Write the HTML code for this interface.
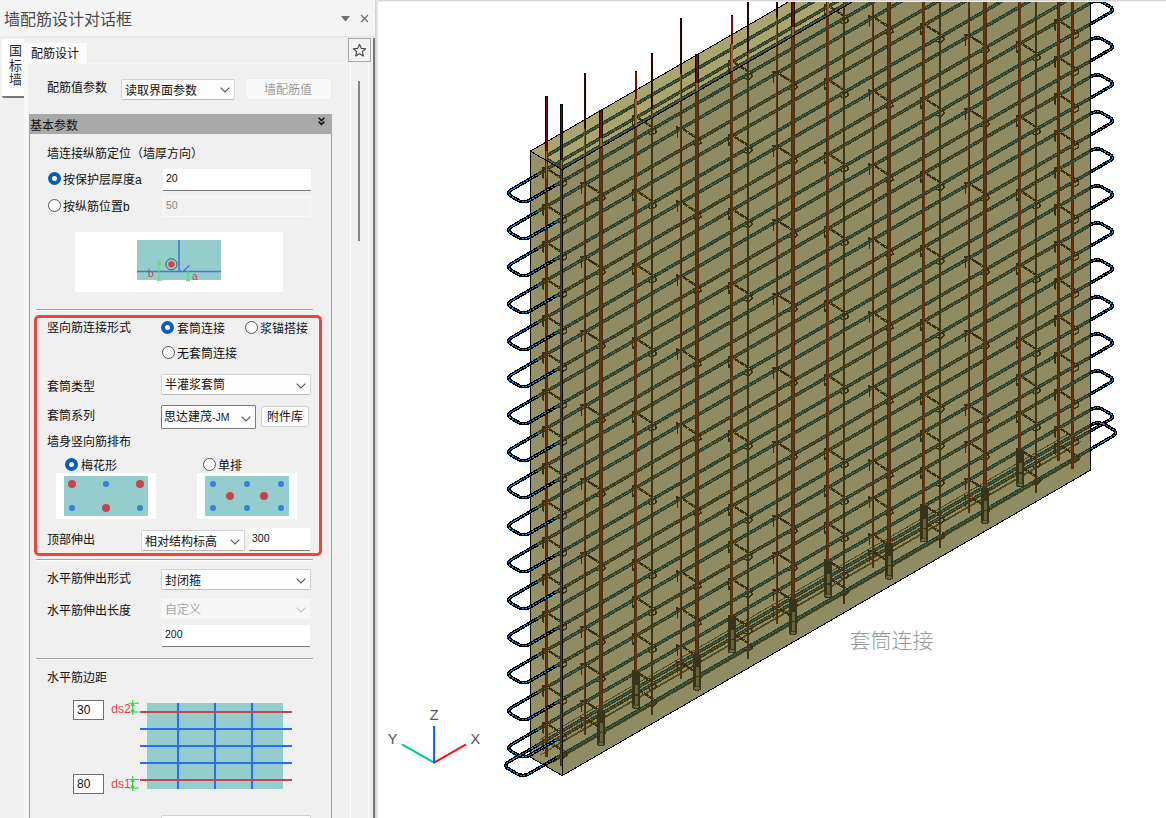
<!DOCTYPE html>
<html lang="zh-CN"><head><meta charset="utf-8"><title>墙配筋设计对话框</title>
<style>
html,body{margin:0;padding:0;}
body{width:1166px;height:818px;position:relative;overflow:hidden;background:#fff;font-family:"Liberation Sans","Noto Sans CJK SC",sans-serif;font-size:12px;color:#111;}
.abs,.abs *{position:absolute;box-sizing:border-box;}
#panel{left:0;top:0;width:378px;height:818px;background:#f0f0f0;overflow:hidden;}
.t{white-space:nowrap;line-height:16px;height:16px;margin-top:1px;}
.lbl{left:47px;}
.sel{background:#fdfdfd;border:1px solid #d2d2d2;border-bottom-color:#bcbcbc;border-radius:2px;}
.sel .t{left:3px;top:2px;}
.sel svg{right:4px;top:6px;}
.inp{background:#fff;border-bottom:1px solid #7a7a7a;}
.inp .t{font-size:10.5px;margin-top:0;}
.rad{width:13px;height:13px;border-radius:50%;border:1px solid #555;background:#fff;}
.rad.on{border:4px solid #0a5db8;background:#fff;}
.sep{left:36px;width:277px;height:2px;border-top:1px solid #a6a6a6;border-bottom:1px solid #fcfcfc;}
.box{background:#fff;}
.teal{background:#95cdcd;}
.dot{border-radius:50%;}
.r{background:#c8434b;width:8px;height:8px;}
.b{background:#3b7de0;width:6px;height:6px;}
</style></head><body>
<div id="panel" class="abs">
  <!-- title bar -->
  <div style="left:0;top:0;width:375px;height:36px;background:#f5f5f5;"></div>
  <div style="left:0;top:36px;width:375px;height:2px;background:#e9e9e9;"></div>
  <div class="t" style="left:4px;top:10px;font-size:16px;color:#4a4a4a;line-height:18px;height:18px;">墙配筋设计对话框</div>
  <svg style="left:341px;top:16px" width="9" height="6" viewBox="0 0 9 6"><path d="M0 0H9L4.5 5.5Z" fill="#707070"/></svg>
  <svg style="left:360px;top:14px" width="9" height="9" viewBox="0 0 9 9"><path d="M1 1L8 8M8 1L1 8" stroke="#707070" stroke-width="1.3" fill="none"/></svg>
  <!-- right edge strips -->
  <div style="left:373px;top:38px;width:2px;height:780px;background:#757575;"></div>
  <div style="left:375px;top:0;width:3px;height:818px;background:linear-gradient(90deg,#cfcfcf,#ececec);"></div>
  <!-- vertical tab -->
  <div style="left:2px;top:39px;width:22px;height:59px;background:#fff;border-bottom:2px solid #777;border-radius:0 0 0 2px;"></div>
  <div class="t" style="left:9px;top:43px;font-size:13px;line-height:14.6px;height:46px;width:14px;white-space:normal;color:#2a2a3a;">国标墙</div>
  <!-- tab page -->
  <div style="left:24px;top:63px;width:327px;height:760px;background:#f7f7f7;border-right:1px solid #fff;"></div>
  <div style="left:28px;top:64px;width:322px;height:760px;background:#f0f0f0;"></div>
  <div style="left:24px;top:43px;width:63px;height:21px;background:#fbfbfb;"></div>
  <div class="t" style="left:31px;top:45px;">配筋设计</div>
  <!-- star button -->
  <div style="left:348px;top:38px;width:23px;height:24px;background:#f4f4f4;border:1px solid #a9a9a9;"></div>
  <svg style="left:352px;top:43px" width="15" height="15" viewBox="0 0 15 15"><path d="M7.5 1.3L9.3 5.4L13.7 5.8L10.4 8.7L11.4 13L7.5 10.7L3.6 13L4.6 8.7L1.3 5.8L5.7 5.4Z" fill="none" stroke="#444" stroke-width="1.1" stroke-linejoin="round"/></svg>
  <!-- scrollbar -->
  <div style="left:358px;top:81px;width:2px;height:160px;background:#858585;"></div>
  <div style="left:368px;top:62px;width:1px;height:760px;background:#f8f8f8;"></div>

  <!-- row 1 -->
  <div class="t" style="left:47px;top:79px;">配筋值参数</div>
  <div class="sel" style="left:121px;top:79px;width:114px;height:21px;"><div class="t">读取界面参数</div>
    <svg width="10" height="6" viewBox="0 0 10 6" style="top:7px"><path d="M.7 .7L5 5L9.3 .7" stroke="#555" stroke-width="1.1" fill="none"/></svg></div>
  <div style="left:245px;top:78px;width:87px;height:22px;background:#f9f9f9;border:1px solid #ececec;border-radius:4px;"></div>
  <div class="t" style="left:245px;top:81px;width:86px;text-align:center;color:#777;font-weight:300;">墙配筋值</div>

  <!-- group -->
  <div style="left:29px;top:114px;width:303px;height:20px;background:#a9a9a9;"></div>
  <div style="left:29px;top:134px;width:303px;height:700px;border-left:1px solid #a3a3a3;border-right:1px solid #a3a3a3;"></div>
  <div class="t" style="left:30px;top:117px;">基本参数</div>
  <svg style="left:318px;top:117px" width="7" height="9" viewBox="0 0 7 9"><path d="M.6 .8L3.5 3.6L6.4 .8M.6 4.6L3.5 7.4L6.4 4.6" stroke="#111" stroke-width="1.5" fill="none"/></svg>

  <div class="t lbl" style="top:145px;">墙连接纵筋定位（墙厚方向）</div>
  <div class="rad on" style="left:48px;top:172px;"></div>
  <div class="t" style="left:63px;top:171px;">按保护层厚度a</div>
  <div class="inp" style="left:163px;top:169px;width:148px;height:22px;"><div class="t" style="left:3px;top:1px;">20</div></div>
  <div class="rad" style="left:48px;top:199px;"></div>
  <div class="t" style="left:63px;top:198px;">按纵筋位置b</div>
  <div style="left:163px;top:196px;width:148px;height:21px;background:#f1f1f1;border:1px solid #f8f8f8;"><div class="t" style="left:2px;top:0px;font-size:10.5px;color:#8a8a8a;margin-top:0;">50</div></div>

  <!-- small diagram -->
  <div class="box" style="left:75px;top:232px;width:208px;height:60px;"></div>
  <svg style="left:75px;top:232px" width="208" height="60" viewBox="75 232 208 60">
    <rect x="137" y="240" width="84" height="40" fill="#95cdcd"/>
    <path d="M179 240V268.5Q179 271.5 182 271.5" stroke="#3b7bd6" stroke-width="1.6" fill="none"/>
    <path d="M137 271.5H221M183.5 271L189.5 265.5" stroke="#3b7bd6" stroke-width="1.4" fill="none"/>
    <circle cx="171.4" cy="264.3" r="5.6" fill="#9fc8c8" stroke="#555" stroke-width="1"/>
    <circle cx="171.4" cy="264.3" r="3.1" fill="#d2404a"/>
    <path d="M159 262V281M157.5 264.5L159 261L160.7 264.5M157 281.5L159 279L162 281M188 272V281M186.5 274.5L188 271.5L189.7 274.5M186.3 281.5L188 279L190 281" stroke="#5fe070" stroke-width="1.2" fill="none"/>
    <text x="148" y="277" font-size="10.5" fill="#d04650" font-family="'Liberation Sans',sans-serif">b</text>
    <text x="192" y="279.5" font-size="10.5" fill="#d04650" font-family="'Liberation Sans',sans-serif">a</text>
  </svg>

  <div class="sep" style="top:309px;"></div>
  <!-- red highlight -->
  <div style="left:34px;top:315px;width:288px;height:241px;border:3px solid #e9483b;border-radius:5px;"></div>

  <div class="t lbl" style="top:319px;">竖向筋连接形式</div>
  <div class="rad on" style="left:161px;top:321px;"></div>
  <div class="t" style="left:177px;top:320px;">套筒连接</div>
  <div class="rad" style="left:245px;top:321px;"></div>
  <div class="t" style="left:260px;top:320px;">浆锚搭接</div>
  <div class="rad" style="left:162px;top:346px;"></div>
  <div class="t" style="left:177px;top:345px;">无套筒连接</div>

  <div class="t lbl" style="top:378px;">套筒类型</div>
  <div class="sel" style="left:161px;top:374px;width:150px;height:21px;"><div class="t" style="top:1px">半灌浆套筒</div>
    <svg width="10" height="6" viewBox="0 0 10 6" style="top:8px"><path d="M.7 .7L5 5L9.3 .7" stroke="#555" stroke-width="1.1" fill="none"/></svg></div>

  <div class="t lbl" style="top:407px;">套筒系列</div>
  <div class="sel" style="left:161px;top:405px;width:95px;height:24px;border-color:#7d7d7d;border-radius:1px;"><div class="t" style="left:2px;top:2px;">思达建茂<span style="font-size:10.5px;color:#223">-JM</span></div>
    <svg width="10" height="6" viewBox="0 0 10 6" style="top:10px"><path d="M.7 .7L5 5L9.3 .7" stroke="#555" stroke-width="1.1" fill="none"/></svg></div>
  <div style="left:261px;top:406px;width:48px;height:21px;background:#fdfdfd;border:1px solid #d0d0d0;border-radius:3px;"></div>
  <div class="t" style="left:261px;top:408px;width:48px;text-align:center;">附件库</div>

  <div class="t lbl" style="top:433px;">墙身竖向筋排布</div>
  <div class="rad on" style="left:65px;top:458px;"></div>
  <div class="t" style="left:81px;top:457px;">梅花形</div>
  <div class="rad" style="left:203px;top:458px;"></div>
  <div class="t" style="left:218px;top:457px;">单排</div>

  <div class="box" style="left:56px;top:473px;width:100px;height:46px;"></div>
  <div class="teal" style="left:64px;top:476px;width:84px;height:40px;"></div>
  <div class="dot r" style="left:68px;top:480px;"></div><div class="dot b" style="left:103px;top:481px;"></div><div class="dot r" style="left:136px;top:480px;"></div>
  <div class="dot b" style="left:69px;top:505px;"></div><div class="dot r" style="left:102px;top:504px;"></div><div class="dot b" style="left:137px;top:505px;"></div>

  <div class="box" style="left:197px;top:473px;width:100px;height:46px;"></div>
  <div class="teal" style="left:205px;top:476px;width:84px;height:40px;"></div>
  <div class="dot b" style="left:210px;top:481px;"></div><div class="dot b" style="left:244px;top:481px;"></div><div class="dot b" style="left:278px;top:481px;"></div>
  <div class="dot b" style="left:210px;top:505px;"></div><div class="dot b" style="left:244px;top:505px;"></div><div class="dot b" style="left:278px;top:505px;"></div>
  <div class="dot r" style="left:226px;top:492px;"></div><div class="dot r" style="left:260px;top:492px;"></div>

  <div class="t lbl" style="top:531px;">顶部伸出</div>
  <div class="sel" style="left:141px;top:530px;width:104px;height:21px;"><div class="t">相对结构标高</div>
    <svg width="10" height="6" viewBox="0 0 10 6" style="top:8px"><path d="M.7 .7L5 5L9.3 .7" stroke="#555" stroke-width="1.1" fill="none"/></svg></div>
  <div class="inp" style="left:249px;top:528px;width:61px;height:23px;"><div class="t" style="left:3px;top:2px;">300</div></div>

  <div class="sep" style="top:559px;"></div>
  <div class="t lbl" style="top:570px;">水平筋伸出形式</div>
  <div class="sel" style="left:161px;top:569px;width:150px;height:21px;"><div class="t">封闭箍</div>
    <svg width="10" height="6" viewBox="0 0 10 6" style="top:8px"><path d="M.7 .7L5 5L9.3 .7" stroke="#555" stroke-width="1.1" fill="none"/></svg></div>
  <div class="t lbl" style="top:602px;">水平筋伸出长度</div>
  <div style="left:161px;top:598px;width:150px;height:21px;background:#f7f7f7;border:1px solid #f2f2f2;"><div class="t" style="left:3px;top:2px;color:#7c7c7c;font-weight:300;">自定义</div>
    <svg width="10" height="6" viewBox="0 0 10 6" style="right:4px;top:8px"><path d="M.7 .7L5 5L9.3 .7" stroke="#c4c4c4" stroke-width="1.1" fill="none"/></svg></div>
  <div class="inp" style="left:162px;top:625px;width:148px;height:22px;"><div class="t" style="left:3px;top:1px;">200</div></div>

  <div class="sep" style="top:658px;"></div>
  <div class="t lbl" style="top:669px;">水平筋边距</div>

  <div style="left:73px;top:700px;width:31px;height:20px;background:#fff;border:1px solid #6e6e6e;"><div class="t" style="left:3px;top:1px;font-size:12px;margin-top:0">30</div></div>
  <div style="left:73px;top:774px;width:31px;height:20px;background:#fff;border:1px solid #6e6e6e;"><div class="t" style="left:3px;top:1px;font-size:12px;margin-top:0">80</div></div>
  <svg style="left:105px;top:695px" width="195" height="105" viewBox="105 695 195 105">
    <rect x="147" y="703" width="136" height="86" fill="#95cdcd"/>
    <g stroke="#2b6cf5" stroke-width="2"><path d="M178 703V789M215 703V789M252 703V789M140 729H292M140 746H292M140 763H292"/></g>
    <g stroke="#c9434b" stroke-width="2"><path d="M140 712H292M140 780H292"/></g>
    <g stroke="#22d83a" stroke-width="1.1" fill="none"><path d="M132.7 700V715M128.5 703.3H139M128.5 712H139M131 706L132.7 703.5L134.4 706M131 709.5L132.7 712L134.4 709.5M132.7 776V791M128.5 779.5H139M128.5 788H139M131 782L132.7 779.7L134.4 782M131 785.5L132.7 788L134.4 785.5"/></g>
    <text x="111.3" y="712.7" font-size="12" fill="#ec4149" font-family="'Liberation Sans',sans-serif">ds2</text>
    <text x="111.3" y="788" font-size="12" fill="#ec4149" font-family="'Liberation Sans',sans-serif">ds1</text>
  </svg>
  <div class="sel" style="left:161px;top:815px;width:150px;height:21px;"></div>
</div>
<svg width="788" height="818" viewBox="378 0 788 818" style="position:absolute;left:378px;top:0">
<defs><clipPath id="vw"><rect x="378" y="2" width="788" height="816"/></clipPath>
<clipPath id="rt"><rect x="1089.5" y="0" width="80" height="818"/></clipPath>
<clipPath id="lf"><rect x="378" y="0" width="711.5" height="818"/></clipPath></defs>
<g clip-path="url(#vw)" fill="none" stroke-linecap="butt" shape-rendering="crispEdges">
<polygon points="562.3,169.7 1090.3,-135.6 1090.3,470.3 562.3,775.6" fill="#8f8b63" stroke="none"/>
<polygon points="530.3,151.2 562.3,169.7 562.3,775.6 530.3,757.1" fill="#949067" stroke="none"/>
<polygon points="530.3,151.2 1058.3,-154.1 1090.3,-135.6 562.3,169.7" fill="#a9a56e" stroke="none"/>
<g stroke="#3c3a18" stroke-width="3.5">
<line x1="537.3" y1="174.7" x2="1065.3" y2="-130.6" />
<line x1="555.6" y1="185.2" x2="1083.6" y2="-120" />
<line x1="537.3" y1="211.7" x2="1065.3" y2="-93.6" />
<line x1="555.6" y1="222.2" x2="1083.6" y2="-83" />
<line x1="537.3" y1="248.7" x2="1065.3" y2="-56.6" />
<line x1="555.6" y1="259.2" x2="1083.6" y2="-46" />
<line x1="537.3" y1="285.7" x2="1065.3" y2="-19.6" />
<line x1="555.6" y1="296.2" x2="1083.6" y2="-9" />
<line x1="537.3" y1="322.7" x2="1065.3" y2="17.4" />
<line x1="555.6" y1="333.2" x2="1083.6" y2="28" />
<line x1="537.3" y1="359.7" x2="1065.3" y2="54.4" />
<line x1="555.6" y1="370.2" x2="1083.6" y2="65" />
<line x1="537.3" y1="396.7" x2="1065.3" y2="91.4" />
<line x1="555.6" y1="407.2" x2="1083.6" y2="102" />
<line x1="537.3" y1="433.7" x2="1065.3" y2="128.4" />
<line x1="555.6" y1="444.2" x2="1083.6" y2="139" />
<line x1="537.3" y1="470.7" x2="1065.3" y2="165.4" />
<line x1="555.6" y1="481.2" x2="1083.6" y2="176" />
<line x1="537.3" y1="507.7" x2="1065.3" y2="202.4" />
<line x1="555.6" y1="518.2" x2="1083.6" y2="213" />
<line x1="537.3" y1="544.7" x2="1065.3" y2="239.4" />
<line x1="555.6" y1="555.2" x2="1083.6" y2="250" />
<line x1="537.3" y1="581.7" x2="1065.3" y2="276.4" />
<line x1="555.6" y1="592.2" x2="1083.6" y2="287" />
<line x1="537.3" y1="618.7" x2="1065.3" y2="313.4" />
<line x1="555.6" y1="629.2" x2="1083.6" y2="324" />
<line x1="537.3" y1="655.7" x2="1065.3" y2="350.4" />
<line x1="555.6" y1="666.2" x2="1083.6" y2="361" />
<line x1="537.3" y1="692.7" x2="1065.3" y2="387.4" />
<line x1="555.6" y1="703.2" x2="1083.6" y2="398" />
<line x1="537.3" y1="729.7" x2="1065.3" y2="424.4" />
<line x1="555.6" y1="740.2" x2="1083.6" y2="435" />
<line x1="536.4" y1="745.8" x2="1064.4" y2="440.5" />
<line x1="556.9" y1="757.6" x2="1084.9" y2="452.4" />
</g>
<g stroke="#2c6e6c" stroke-width="1" stroke-dasharray="3 1">
<line x1="537.3" y1="174.7" x2="1065.3" y2="-130.6" />
<line x1="555.6" y1="185.2" x2="1083.6" y2="-120" />
<line x1="537.3" y1="211.7" x2="1065.3" y2="-93.6" />
<line x1="555.6" y1="222.2" x2="1083.6" y2="-83" />
<line x1="537.3" y1="248.7" x2="1065.3" y2="-56.6" />
<line x1="555.6" y1="259.2" x2="1083.6" y2="-46" />
<line x1="537.3" y1="285.7" x2="1065.3" y2="-19.6" />
<line x1="555.6" y1="296.2" x2="1083.6" y2="-9" />
<line x1="537.3" y1="322.7" x2="1065.3" y2="17.4" />
<line x1="555.6" y1="333.2" x2="1083.6" y2="28" />
<line x1="537.3" y1="359.7" x2="1065.3" y2="54.4" />
<line x1="555.6" y1="370.2" x2="1083.6" y2="65" />
<line x1="537.3" y1="396.7" x2="1065.3" y2="91.4" />
<line x1="555.6" y1="407.2" x2="1083.6" y2="102" />
<line x1="537.3" y1="433.7" x2="1065.3" y2="128.4" />
<line x1="555.6" y1="444.2" x2="1083.6" y2="139" />
<line x1="537.3" y1="470.7" x2="1065.3" y2="165.4" />
<line x1="555.6" y1="481.2" x2="1083.6" y2="176" />
<line x1="537.3" y1="507.7" x2="1065.3" y2="202.4" />
<line x1="555.6" y1="518.2" x2="1083.6" y2="213" />
<line x1="537.3" y1="544.7" x2="1065.3" y2="239.4" />
<line x1="555.6" y1="555.2" x2="1083.6" y2="250" />
<line x1="537.3" y1="581.7" x2="1065.3" y2="276.4" />
<line x1="555.6" y1="592.2" x2="1083.6" y2="287" />
<line x1="537.3" y1="618.7" x2="1065.3" y2="313.4" />
<line x1="555.6" y1="629.2" x2="1083.6" y2="324" />
<line x1="537.3" y1="655.7" x2="1065.3" y2="350.4" />
<line x1="555.6" y1="666.2" x2="1083.6" y2="361" />
<line x1="537.3" y1="692.7" x2="1065.3" y2="387.4" />
<line x1="555.6" y1="703.2" x2="1083.6" y2="398" />
<line x1="537.3" y1="729.7" x2="1065.3" y2="424.4" />
<line x1="555.6" y1="740.2" x2="1083.6" y2="435" />
<line x1="536.4" y1="745.8" x2="1064.4" y2="440.5" />
<line x1="556.9" y1="757.6" x2="1084.9" y2="452.4" />
</g>
<polyline points="548.5,154.7 547.5,155.5 546.8,156.5 546.6,157.5 546.8,158.5 547.5,159.5 548.5,160.3 557.2,165.3 558.6,165.9 560.2,166.3 562,166.4 563.7,166.3 565.4,165.9 566.8,165.3 1072.4,-127 1073.5,-127.9 1074.1,-128.8 1074.4,-129.8 1074.1,-130.8 1073.5,-131.8 1072.4,-132.6 1063.7,-137.6 1062.3,-138.2 1060.7,-138.6 1058.9,-138.7 1057.2,-138.6 1055.5,-138.2 1054.1,-137.6 548.5,154.7" stroke="#3c3a18" stroke-width="3.5"/>
<polyline points="548.5,154.7 547.5,155.5 546.8,156.5 546.6,157.5 546.8,158.5 547.5,159.5 548.5,160.3 557.2,165.3 558.6,165.9 560.2,166.3 562,166.4 563.7,166.3 565.4,165.9 566.8,165.3 1072.4,-127 1073.5,-127.9 1074.1,-128.8 1074.4,-129.8 1074.1,-130.8 1073.5,-131.8 1072.4,-132.6 1063.7,-137.6 1062.3,-138.2 1060.7,-138.6 1058.9,-138.7 1057.2,-138.6 1055.5,-138.2 1054.1,-137.6 548.5,154.7" stroke="#2c6e6c" stroke-width="1" stroke-dasharray="3 1"/>
<g stroke="#4b4a22" stroke-width="1">
<line x1="539.9" y1="739.5" x2="1067.9" y2="434.2" />
<line x1="552.7" y1="746.9" x2="1080.7" y2="441.6" />
<line x1="539.9" y1="755.2" x2="1067.9" y2="450" />
<line x1="552.7" y1="762.6" x2="1080.7" y2="457.4" />
</g>
<g stroke="#38310f" stroke-width="2.3" stroke-linecap="round">
<line x1="546.3" y1="168.4" x2="565.8" y2="180.8" />
<polyline points="546.3,168.4 542.8,167.9 543.3,178.4" stroke-width="1.5"/>
<polyline points="565.8,180.8 566.8,183.8 562.8,186.8 558.8,185.3" stroke-width="1.4"/>
<line x1="546.3" y1="205.4" x2="565.8" y2="217.8" />
<polyline points="546.3,205.4 542.8,204.9 543.3,215.4" stroke-width="1.5"/>
<polyline points="565.8,217.8 566.8,220.8 562.8,223.8 558.8,222.3" stroke-width="1.4"/>
<line x1="546.3" y1="242.4" x2="565.8" y2="254.8" />
<polyline points="546.3,242.4 542.8,241.9 543.3,252.4" stroke-width="1.5"/>
<polyline points="565.8,254.8 566.8,257.8 562.8,260.8 558.8,259.3" stroke-width="1.4"/>
<line x1="546.3" y1="279.4" x2="565.8" y2="291.8" />
<polyline points="546.3,279.4 542.8,278.9 543.3,289.4" stroke-width="1.5"/>
<polyline points="565.8,291.8 566.8,294.8 562.8,297.8 558.8,296.3" stroke-width="1.4"/>
<line x1="546.3" y1="316.4" x2="565.8" y2="328.8" />
<polyline points="546.3,316.4 542.8,315.9 543.3,326.4" stroke-width="1.5"/>
<polyline points="565.8,328.8 566.8,331.8 562.8,334.8 558.8,333.3" stroke-width="1.4"/>
<line x1="546.3" y1="353.4" x2="565.8" y2="365.8" />
<polyline points="546.3,353.4 542.8,352.9 543.3,363.4" stroke-width="1.5"/>
<polyline points="565.8,365.8 566.8,368.8 562.8,371.8 558.8,370.3" stroke-width="1.4"/>
<line x1="546.3" y1="390.4" x2="565.8" y2="402.8" />
<polyline points="546.3,390.4 542.8,389.9 543.3,400.4" stroke-width="1.5"/>
<polyline points="565.8,402.8 566.8,405.8 562.8,408.8 558.8,407.3" stroke-width="1.4"/>
<line x1="546.3" y1="427.4" x2="565.8" y2="439.8" />
<polyline points="546.3,427.4 542.8,426.9 543.3,437.4" stroke-width="1.5"/>
<polyline points="565.8,439.8 566.8,442.8 562.8,445.8 558.8,444.3" stroke-width="1.4"/>
<line x1="546.3" y1="464.4" x2="565.8" y2="476.8" />
<polyline points="546.3,464.4 542.8,463.9 543.3,474.4" stroke-width="1.5"/>
<polyline points="565.8,476.8 566.8,479.8 562.8,482.8 558.8,481.3" stroke-width="1.4"/>
<line x1="546.3" y1="501.4" x2="565.8" y2="513.8" />
<polyline points="546.3,501.4 542.8,500.9 543.3,511.4" stroke-width="1.5"/>
<polyline points="565.8,513.8 566.8,516.8 562.8,519.8 558.8,518.3" stroke-width="1.4"/>
<line x1="546.3" y1="538.4" x2="565.8" y2="550.8" />
<polyline points="546.3,538.4 542.8,537.9 543.3,548.4" stroke-width="1.5"/>
<polyline points="565.8,550.8 566.8,553.8 562.8,556.8 558.8,555.3" stroke-width="1.4"/>
<line x1="546.3" y1="575.4" x2="565.8" y2="587.8" />
<polyline points="546.3,575.4 542.8,574.9 543.3,585.4" stroke-width="1.5"/>
<polyline points="565.8,587.8 566.8,590.8 562.8,593.8 558.8,592.3" stroke-width="1.4"/>
<line x1="546.3" y1="612.4" x2="565.8" y2="624.8" />
<polyline points="546.3,612.4 542.8,611.9 543.3,622.4" stroke-width="1.5"/>
<polyline points="565.8,624.8 566.8,627.8 562.8,630.8 558.8,629.3" stroke-width="1.4"/>
<line x1="546.3" y1="649.4" x2="565.8" y2="661.8" />
<polyline points="546.3,649.4 542.8,648.9 543.3,659.4" stroke-width="1.5"/>
<polyline points="565.8,661.8 566.8,664.8 562.8,667.8 558.8,666.3" stroke-width="1.4"/>
<line x1="546.3" y1="686.4" x2="565.8" y2="698.8" />
<polyline points="546.3,686.4 542.8,685.9 543.3,696.4" stroke-width="1.5"/>
<polyline points="565.8,698.8 566.8,701.8 562.8,704.8 558.8,703.3" stroke-width="1.4"/>
<line x1="546.3" y1="723.4" x2="565.8" y2="735.8" />
<polyline points="546.3,723.4 542.8,722.9 543.3,733.4" stroke-width="1.5"/>
<polyline points="565.8,735.8 566.8,738.8 562.8,741.8 558.8,740.3" stroke-width="1.4"/>
<line x1="546.3" y1="740.1" x2="565.8" y2="752.5" />
<polyline points="546.3,740.1 542.8,739.6 543.3,750.1" stroke-width="1.5"/>
<polyline points="565.8,752.5 566.8,755.5 562.8,758.5 558.8,757" stroke-width="1.4"/>
<line x1="584.7" y1="183.2" x2="604.2" y2="195.6" />
<polyline points="584.7,183.2 581.2,182.7 581.7,193.2" stroke-width="1.5"/>
<polyline points="604.2,195.6 605.2,198.6 601.2,201.6 597.2,200.1" stroke-width="1.4"/>
<line x1="584.7" y1="257.2" x2="604.2" y2="269.6" />
<polyline points="584.7,257.2 581.2,256.7 581.7,267.2" stroke-width="1.5"/>
<polyline points="604.2,269.6 605.2,272.6 601.2,275.6 597.2,274.1" stroke-width="1.4"/>
<line x1="584.7" y1="331.2" x2="604.2" y2="343.6" />
<polyline points="584.7,331.2 581.2,330.7 581.7,341.2" stroke-width="1.5"/>
<polyline points="604.2,343.6 605.2,346.6 601.2,349.6 597.2,348.1" stroke-width="1.4"/>
<line x1="584.7" y1="405.2" x2="604.2" y2="417.6" />
<polyline points="584.7,405.2 581.2,404.7 581.7,415.2" stroke-width="1.5"/>
<polyline points="604.2,417.6 605.2,420.6 601.2,423.6 597.2,422.1" stroke-width="1.4"/>
<line x1="584.7" y1="479.2" x2="604.2" y2="491.6" />
<polyline points="584.7,479.2 581.2,478.7 581.7,489.2" stroke-width="1.5"/>
<polyline points="604.2,491.6 605.2,494.6 601.2,497.6 597.2,496.1" stroke-width="1.4"/>
<line x1="584.7" y1="553.2" x2="604.2" y2="565.6" />
<polyline points="584.7,553.2 581.2,552.7 581.7,563.2" stroke-width="1.5"/>
<polyline points="604.2,565.6 605.2,568.6 601.2,571.6 597.2,570.1" stroke-width="1.4"/>
<line x1="584.7" y1="627.2" x2="604.2" y2="639.6" />
<polyline points="584.7,627.2 581.2,626.7 581.7,637.2" stroke-width="1.5"/>
<polyline points="604.2,639.6 605.2,642.6 601.2,645.6 597.2,644.1" stroke-width="1.4"/>
<line x1="584.7" y1="664.2" x2="604.2" y2="676.6" />
<polyline points="584.7,664.2 581.2,663.7 581.7,674.2" stroke-width="1.5"/>
<polyline points="604.2,676.6 605.2,679.6 601.2,682.6 597.2,681.1" stroke-width="1.4"/>
<line x1="584.7" y1="701.2" x2="604.2" y2="713.6" />
<polyline points="584.7,701.2 581.2,700.7 581.7,711.2" stroke-width="1.5"/>
<polyline points="604.2,713.6 605.2,716.6 601.2,719.6 597.2,718.1" stroke-width="1.4"/>
<line x1="584.7" y1="717.9" x2="604.2" y2="730.2" />
<polyline points="584.7,717.9 581.2,717.4 581.7,727.9" stroke-width="1.5"/>
<polyline points="604.2,730.2 605.2,733.2 601.2,736.2 597.2,734.8" stroke-width="1.4"/>
<line x1="635.9" y1="116.6" x2="655.4" y2="129" />
<polyline points="635.9,116.6 632.4,116.1 632.9,126.6" stroke-width="1.5"/>
<polyline points="655.4,129 656.4,132 652.4,135 648.4,133.5" stroke-width="1.4"/>
<line x1="635.9" y1="190.6" x2="655.4" y2="203" />
<polyline points="635.9,190.6 632.4,190.1 632.9,200.6" stroke-width="1.5"/>
<polyline points="655.4,203 656.4,206 652.4,209 648.4,207.5" stroke-width="1.4"/>
<line x1="635.9" y1="264.6" x2="655.4" y2="277" />
<polyline points="635.9,264.6 632.4,264.1 632.9,274.6" stroke-width="1.5"/>
<polyline points="655.4,277 656.4,280 652.4,283 648.4,281.5" stroke-width="1.4"/>
<line x1="635.9" y1="338.6" x2="655.4" y2="351" />
<polyline points="635.9,338.6 632.4,338.1 632.9,348.6" stroke-width="1.5"/>
<polyline points="655.4,351 656.4,354 652.4,357 648.4,355.5" stroke-width="1.4"/>
<line x1="635.9" y1="412.6" x2="655.4" y2="425" />
<polyline points="635.9,412.6 632.4,412.1 632.9,422.6" stroke-width="1.5"/>
<polyline points="655.4,425 656.4,428 652.4,431 648.4,429.5" stroke-width="1.4"/>
<line x1="635.9" y1="486.6" x2="655.4" y2="499" />
<polyline points="635.9,486.6 632.4,486.1 632.9,496.6" stroke-width="1.5"/>
<polyline points="655.4,499 656.4,502 652.4,505 648.4,503.5" stroke-width="1.4"/>
<line x1="635.9" y1="560.6" x2="655.4" y2="573" />
<polyline points="635.9,560.6 632.4,560.1 632.9,570.6" stroke-width="1.5"/>
<polyline points="655.4,573 656.4,576 652.4,579 648.4,577.5" stroke-width="1.4"/>
<line x1="635.9" y1="597.6" x2="655.4" y2="610" />
<polyline points="635.9,597.6 632.4,597.1 632.9,607.6" stroke-width="1.5"/>
<polyline points="655.4,610 656.4,613 652.4,616 648.4,614.5" stroke-width="1.4"/>
<line x1="635.9" y1="634.6" x2="655.4" y2="647" />
<polyline points="635.9,634.6 632.4,634.1 632.9,644.6" stroke-width="1.5"/>
<polyline points="655.4,647 656.4,650 652.4,653 648.4,651.5" stroke-width="1.4"/>
<line x1="635.9" y1="671.6" x2="655.4" y2="684" />
<polyline points="635.9,671.6 632.4,671.1 632.9,681.6" stroke-width="1.5"/>
<polyline points="655.4,684 656.4,687 652.4,690 648.4,688.5" stroke-width="1.4"/>
<line x1="635.9" y1="688.3" x2="655.4" y2="700.6" />
<polyline points="635.9,688.3 632.4,687.8 632.9,698.3" stroke-width="1.5"/>
<polyline points="655.4,700.6 656.4,703.6 652.4,706.6 648.4,705.1" stroke-width="1.4"/>
<line x1="680.7" y1="127.7" x2="700.2" y2="140.1" />
<polyline points="680.7,127.7 677.2,127.2 677.7,137.7" stroke-width="1.5"/>
<polyline points="700.2,140.1 701.2,143.1 697.2,146.1 693.2,144.6" stroke-width="1.4"/>
<line x1="680.7" y1="201.7" x2="700.2" y2="214.1" />
<polyline points="680.7,201.7 677.2,201.2 677.7,211.7" stroke-width="1.5"/>
<polyline points="700.2,214.1 701.2,217.1 697.2,220.1 693.2,218.6" stroke-width="1.4"/>
<line x1="680.7" y1="275.7" x2="700.2" y2="288.1" />
<polyline points="680.7,275.7 677.2,275.2 677.7,285.7" stroke-width="1.5"/>
<polyline points="700.2,288.1 701.2,291.1 697.2,294.1 693.2,292.6" stroke-width="1.4"/>
<line x1="680.7" y1="349.7" x2="700.2" y2="362.1" />
<polyline points="680.7,349.7 677.2,349.2 677.7,359.7" stroke-width="1.5"/>
<polyline points="700.2,362.1 701.2,365.1 697.2,368.1 693.2,366.6" stroke-width="1.4"/>
<line x1="680.7" y1="423.7" x2="700.2" y2="436.1" />
<polyline points="680.7,423.7 677.2,423.2 677.7,433.7" stroke-width="1.5"/>
<polyline points="700.2,436.1 701.2,439.1 697.2,442.1 693.2,440.6" stroke-width="1.4"/>
<line x1="680.7" y1="497.7" x2="700.2" y2="510.1" />
<polyline points="680.7,497.7 677.2,497.2 677.7,507.7" stroke-width="1.5"/>
<polyline points="700.2,510.1 701.2,513.1 697.2,516.1 693.2,514.6" stroke-width="1.4"/>
<line x1="680.7" y1="571.7" x2="700.2" y2="584.1" />
<polyline points="680.7,571.7 677.2,571.2 677.7,581.7" stroke-width="1.5"/>
<polyline points="700.2,584.1 701.2,587.1 697.2,590.1 693.2,588.6" stroke-width="1.4"/>
<line x1="680.7" y1="608.7" x2="700.2" y2="621.1" />
<polyline points="680.7,608.7 677.2,608.2 677.7,618.7" stroke-width="1.5"/>
<polyline points="700.2,621.1 701.2,624.1 697.2,627.1 693.2,625.6" stroke-width="1.4"/>
<line x1="680.7" y1="645.7" x2="700.2" y2="658.1" />
<polyline points="680.7,645.7 677.2,645.2 677.7,655.7" stroke-width="1.5"/>
<polyline points="700.2,658.1 701.2,661.1 697.2,664.1 693.2,662.6" stroke-width="1.4"/>
<line x1="680.7" y1="662.4" x2="700.2" y2="674.8" />
<polyline points="680.7,662.4 677.2,661.9 677.7,672.4" stroke-width="1.5"/>
<polyline points="700.2,674.8 701.2,677.8 697.2,680.8 693.2,679.2" stroke-width="1.4"/>
<line x1="731.9" y1="61.1" x2="751.4" y2="73.5" />
<polyline points="731.9,61.1 728.4,60.6 728.9,71.1" stroke-width="1.5"/>
<polyline points="751.4,73.5 752.4,76.5 748.4,79.5 744.4,78" stroke-width="1.4"/>
<line x1="731.9" y1="135.1" x2="751.4" y2="147.5" />
<polyline points="731.9,135.1 728.4,134.6 728.9,145.1" stroke-width="1.5"/>
<polyline points="751.4,147.5 752.4,150.5 748.4,153.5 744.4,152" stroke-width="1.4"/>
<line x1="731.9" y1="209.1" x2="751.4" y2="221.5" />
<polyline points="731.9,209.1 728.4,208.6 728.9,219.1" stroke-width="1.5"/>
<polyline points="751.4,221.5 752.4,224.5 748.4,227.5 744.4,226" stroke-width="1.4"/>
<line x1="731.9" y1="283.1" x2="751.4" y2="295.5" />
<polyline points="731.9,283.1 728.4,282.6 728.9,293.1" stroke-width="1.5"/>
<polyline points="751.4,295.5 752.4,298.5 748.4,301.5 744.4,300" stroke-width="1.4"/>
<line x1="731.9" y1="357.1" x2="751.4" y2="369.5" />
<polyline points="731.9,357.1 728.4,356.6 728.9,367.1" stroke-width="1.5"/>
<polyline points="751.4,369.5 752.4,372.5 748.4,375.5 744.4,374" stroke-width="1.4"/>
<line x1="731.9" y1="431.1" x2="751.4" y2="443.5" />
<polyline points="731.9,431.1 728.4,430.6 728.9,441.1" stroke-width="1.5"/>
<polyline points="751.4,443.5 752.4,446.5 748.4,449.5 744.4,448" stroke-width="1.4"/>
<line x1="731.9" y1="505.1" x2="751.4" y2="517.5" />
<polyline points="731.9,505.1 728.4,504.6 728.9,515.1" stroke-width="1.5"/>
<polyline points="751.4,517.5 752.4,520.5 748.4,523.5 744.4,522" stroke-width="1.4"/>
<line x1="731.9" y1="542.1" x2="751.4" y2="554.5" />
<polyline points="731.9,542.1 728.4,541.6 728.9,552.1" stroke-width="1.5"/>
<polyline points="751.4,554.5 752.4,557.5 748.4,560.5 744.4,559" stroke-width="1.4"/>
<line x1="731.9" y1="579.1" x2="751.4" y2="591.5" />
<polyline points="731.9,579.1 728.4,578.6 728.9,589.1" stroke-width="1.5"/>
<polyline points="751.4,591.5 752.4,594.5 748.4,597.5 744.4,596" stroke-width="1.4"/>
<line x1="731.9" y1="616.1" x2="751.4" y2="628.5" />
<polyline points="731.9,616.1 728.4,615.6 728.9,626.1" stroke-width="1.5"/>
<polyline points="751.4,628.5 752.4,631.5 748.4,634.5 744.4,633" stroke-width="1.4"/>
<line x1="731.9" y1="632.8" x2="751.4" y2="645.1" />
<polyline points="731.9,632.8 728.4,632.3 728.9,642.8" stroke-width="1.5"/>
<polyline points="751.4,645.1 752.4,648.1 748.4,651.1 744.4,649.6" stroke-width="1.4"/>
<line x1="776.7" y1="72.2" x2="796.2" y2="84.6" />
<polyline points="776.7,72.2 773.2,71.7 773.7,82.2" stroke-width="1.5"/>
<polyline points="796.2,84.6 797.2,87.6 793.2,90.6 789.2,89.1" stroke-width="1.4"/>
<line x1="776.7" y1="146.2" x2="796.2" y2="158.6" />
<polyline points="776.7,146.2 773.2,145.7 773.7,156.2" stroke-width="1.5"/>
<polyline points="796.2,158.6 797.2,161.6 793.2,164.6 789.2,163.1" stroke-width="1.4"/>
<line x1="776.7" y1="220.2" x2="796.2" y2="232.6" />
<polyline points="776.7,220.2 773.2,219.7 773.7,230.2" stroke-width="1.5"/>
<polyline points="796.2,232.6 797.2,235.6 793.2,238.6 789.2,237.1" stroke-width="1.4"/>
<line x1="776.7" y1="294.2" x2="796.2" y2="306.6" />
<polyline points="776.7,294.2 773.2,293.7 773.7,304.2" stroke-width="1.5"/>
<polyline points="796.2,306.6 797.2,309.6 793.2,312.6 789.2,311.1" stroke-width="1.4"/>
<line x1="776.7" y1="368.2" x2="796.2" y2="380.6" />
<polyline points="776.7,368.2 773.2,367.7 773.7,378.2" stroke-width="1.5"/>
<polyline points="796.2,380.6 797.2,383.6 793.2,386.6 789.2,385.1" stroke-width="1.4"/>
<line x1="776.7" y1="442.2" x2="796.2" y2="454.6" />
<polyline points="776.7,442.2 773.2,441.7 773.7,452.2" stroke-width="1.5"/>
<polyline points="796.2,454.6 797.2,457.6 793.2,460.6 789.2,459.1" stroke-width="1.4"/>
<line x1="776.7" y1="516.2" x2="796.2" y2="528.6" />
<polyline points="776.7,516.2 773.2,515.7 773.7,526.2" stroke-width="1.5"/>
<polyline points="796.2,528.6 797.2,531.6 793.2,534.6 789.2,533.1" stroke-width="1.4"/>
<line x1="776.7" y1="553.2" x2="796.2" y2="565.6" />
<polyline points="776.7,553.2 773.2,552.7 773.7,563.2" stroke-width="1.5"/>
<polyline points="796.2,565.6 797.2,568.6 793.2,571.6 789.2,570.1" stroke-width="1.4"/>
<line x1="776.7" y1="590.2" x2="796.2" y2="602.6" />
<polyline points="776.7,590.2 773.2,589.7 773.7,600.2" stroke-width="1.5"/>
<polyline points="796.2,602.6 797.2,605.6 793.2,608.6 789.2,607.1" stroke-width="1.4"/>
<line x1="776.7" y1="606.9" x2="796.2" y2="619.2" />
<polyline points="776.7,606.9 773.2,606.4 773.7,616.9" stroke-width="1.5"/>
<polyline points="796.2,619.2 797.2,622.2 793.2,625.2 789.2,623.8" stroke-width="1.4"/>
<line x1="827.9" y1="5.6" x2="847.4" y2="18" />
<polyline points="827.9,5.6 824.4,5.1 824.9,15.6" stroke-width="1.5"/>
<polyline points="847.4,18 848.4,21 844.4,24 840.4,22.5" stroke-width="1.4"/>
<line x1="827.9" y1="79.6" x2="847.4" y2="92" />
<polyline points="827.9,79.6 824.4,79.1 824.9,89.6" stroke-width="1.5"/>
<polyline points="847.4,92 848.4,95 844.4,98 840.4,96.5" stroke-width="1.4"/>
<line x1="827.9" y1="153.6" x2="847.4" y2="166" />
<polyline points="827.9,153.6 824.4,153.1 824.9,163.6" stroke-width="1.5"/>
<polyline points="847.4,166 848.4,169 844.4,172 840.4,170.5" stroke-width="1.4"/>
<line x1="827.9" y1="227.6" x2="847.4" y2="240" />
<polyline points="827.9,227.6 824.4,227.1 824.9,237.6" stroke-width="1.5"/>
<polyline points="847.4,240 848.4,243 844.4,246 840.4,244.5" stroke-width="1.4"/>
<line x1="827.9" y1="301.6" x2="847.4" y2="314" />
<polyline points="827.9,301.6 824.4,301.1 824.9,311.6" stroke-width="1.5"/>
<polyline points="847.4,314 848.4,317 844.4,320 840.4,318.5" stroke-width="1.4"/>
<line x1="827.9" y1="375.6" x2="847.4" y2="388" />
<polyline points="827.9,375.6 824.4,375.1 824.9,385.6" stroke-width="1.5"/>
<polyline points="847.4,388 848.4,391 844.4,394 840.4,392.5" stroke-width="1.4"/>
<line x1="827.9" y1="449.6" x2="847.4" y2="462" />
<polyline points="827.9,449.6 824.4,449.1 824.9,459.6" stroke-width="1.5"/>
<polyline points="847.4,462 848.4,465 844.4,468 840.4,466.5" stroke-width="1.4"/>
<line x1="827.9" y1="486.6" x2="847.4" y2="499" />
<polyline points="827.9,486.6 824.4,486.1 824.9,496.6" stroke-width="1.5"/>
<polyline points="847.4,499 848.4,502 844.4,505 840.4,503.5" stroke-width="1.4"/>
<line x1="827.9" y1="523.6" x2="847.4" y2="536" />
<polyline points="827.9,523.6 824.4,523.1 824.9,533.6" stroke-width="1.5"/>
<polyline points="847.4,536 848.4,539 844.4,542 840.4,540.5" stroke-width="1.4"/>
<line x1="827.9" y1="560.6" x2="847.4" y2="573" />
<polyline points="827.9,560.6 824.4,560.1 824.9,570.6" stroke-width="1.5"/>
<polyline points="847.4,573 848.4,576 844.4,579 840.4,577.5" stroke-width="1.4"/>
<line x1="827.9" y1="577.3" x2="847.4" y2="589.7" />
<polyline points="827.9,577.3 824.4,576.8 824.9,587.3" stroke-width="1.5"/>
<polyline points="847.4,589.7 848.4,592.7 844.4,595.7 840.4,594.2" stroke-width="1.4"/>
<line x1="872.7" y1="16.7" x2="892.2" y2="29.1" />
<polyline points="872.7,16.7 869.2,16.2 869.7,26.7" stroke-width="1.5"/>
<polyline points="892.2,29.1 893.2,32.1 889.2,35.1 885.2,33.6" stroke-width="1.4"/>
<line x1="872.7" y1="90.7" x2="892.2" y2="103.1" />
<polyline points="872.7,90.7 869.2,90.2 869.7,100.7" stroke-width="1.5"/>
<polyline points="892.2,103.1 893.2,106.1 889.2,109.1 885.2,107.6" stroke-width="1.4"/>
<line x1="872.7" y1="164.7" x2="892.2" y2="177.1" />
<polyline points="872.7,164.7 869.2,164.2 869.7,174.7" stroke-width="1.5"/>
<polyline points="892.2,177.1 893.2,180.1 889.2,183.1 885.2,181.6" stroke-width="1.4"/>
<line x1="872.7" y1="238.7" x2="892.2" y2="251.1" />
<polyline points="872.7,238.7 869.2,238.2 869.7,248.7" stroke-width="1.5"/>
<polyline points="892.2,251.1 893.2,254.1 889.2,257.1 885.2,255.6" stroke-width="1.4"/>
<line x1="872.7" y1="312.7" x2="892.2" y2="325.1" />
<polyline points="872.7,312.7 869.2,312.2 869.7,322.7" stroke-width="1.5"/>
<polyline points="892.2,325.1 893.2,328.1 889.2,331.1 885.2,329.6" stroke-width="1.4"/>
<line x1="872.7" y1="386.7" x2="892.2" y2="399.1" />
<polyline points="872.7,386.7 869.2,386.2 869.7,396.7" stroke-width="1.5"/>
<polyline points="892.2,399.1 893.2,402.1 889.2,405.1 885.2,403.6" stroke-width="1.4"/>
<line x1="872.7" y1="460.7" x2="892.2" y2="473.1" />
<polyline points="872.7,460.7 869.2,460.2 869.7,470.7" stroke-width="1.5"/>
<polyline points="892.2,473.1 893.2,476.1 889.2,479.1 885.2,477.6" stroke-width="1.4"/>
<line x1="872.7" y1="497.7" x2="892.2" y2="510.1" />
<polyline points="872.7,497.7 869.2,497.2 869.7,507.7" stroke-width="1.5"/>
<polyline points="892.2,510.1 893.2,513.1 889.2,516.1 885.2,514.6" stroke-width="1.4"/>
<line x1="872.7" y1="534.7" x2="892.2" y2="547.1" />
<polyline points="872.7,534.7 869.2,534.2 869.7,544.7" stroke-width="1.5"/>
<polyline points="892.2,547.1 893.2,550.1 889.2,553.1 885.2,551.6" stroke-width="1.4"/>
<line x1="872.7" y1="551.4" x2="892.2" y2="563.8" />
<polyline points="872.7,551.4 869.2,550.9 869.7,561.4" stroke-width="1.5"/>
<polyline points="892.2,563.8 893.2,566.8 889.2,569.8 885.2,568.2" stroke-width="1.4"/>
<line x1="923.9" y1="-49.9" x2="943.4" y2="-37.5" />
<polyline points="923.9,-49.9 920.4,-50.4 920.9,-39.9" stroke-width="1.5"/>
<polyline points="943.4,-37.5 944.4,-34.5 940.4,-31.5 936.4,-33" stroke-width="1.4"/>
<line x1="923.9" y1="24.1" x2="943.4" y2="36.5" />
<polyline points="923.9,24.1 920.4,23.6 920.9,34.1" stroke-width="1.5"/>
<polyline points="943.4,36.5 944.4,39.5 940.4,42.5 936.4,41" stroke-width="1.4"/>
<line x1="923.9" y1="98.1" x2="943.4" y2="110.5" />
<polyline points="923.9,98.1 920.4,97.6 920.9,108.1" stroke-width="1.5"/>
<polyline points="943.4,110.5 944.4,113.5 940.4,116.5 936.4,115" stroke-width="1.4"/>
<line x1="923.9" y1="172.1" x2="943.4" y2="184.5" />
<polyline points="923.9,172.1 920.4,171.6 920.9,182.1" stroke-width="1.5"/>
<polyline points="943.4,184.5 944.4,187.5 940.4,190.5 936.4,189" stroke-width="1.4"/>
<line x1="923.9" y1="246.1" x2="943.4" y2="258.5" />
<polyline points="923.9,246.1 920.4,245.6 920.9,256.1" stroke-width="1.5"/>
<polyline points="943.4,258.5 944.4,261.5 940.4,264.5 936.4,263" stroke-width="1.4"/>
<line x1="923.9" y1="320.1" x2="943.4" y2="332.5" />
<polyline points="923.9,320.1 920.4,319.6 920.9,330.1" stroke-width="1.5"/>
<polyline points="943.4,332.5 944.4,335.5 940.4,338.5 936.4,337" stroke-width="1.4"/>
<line x1="923.9" y1="394.1" x2="943.4" y2="406.5" />
<polyline points="923.9,394.1 920.4,393.6 920.9,404.1" stroke-width="1.5"/>
<polyline points="943.4,406.5 944.4,409.5 940.4,412.5 936.4,411" stroke-width="1.4"/>
<line x1="923.9" y1="431.1" x2="943.4" y2="443.5" />
<polyline points="923.9,431.1 920.4,430.6 920.9,441.1" stroke-width="1.5"/>
<polyline points="943.4,443.5 944.4,446.5 940.4,449.5 936.4,448" stroke-width="1.4"/>
<line x1="923.9" y1="468.1" x2="943.4" y2="480.5" />
<polyline points="923.9,468.1 920.4,467.6 920.9,478.1" stroke-width="1.5"/>
<polyline points="943.4,480.5 944.4,483.5 940.4,486.5 936.4,485" stroke-width="1.4"/>
<line x1="923.9" y1="505.1" x2="943.4" y2="517.5" />
<polyline points="923.9,505.1 920.4,504.6 920.9,515.1" stroke-width="1.5"/>
<polyline points="943.4,517.5 944.4,520.5 940.4,523.5 936.4,522" stroke-width="1.4"/>
<line x1="923.9" y1="521.8" x2="943.4" y2="534.2" />
<polyline points="923.9,521.8 920.4,521.3 920.9,531.8" stroke-width="1.5"/>
<polyline points="943.4,534.2 944.4,537.2 940.4,540.2 936.4,538.7" stroke-width="1.4"/>
<line x1="968.7" y1="-38.8" x2="988.2" y2="-26.4" />
<polyline points="968.7,-38.8 965.2,-39.3 965.7,-28.8" stroke-width="1.5"/>
<polyline points="988.2,-26.4 989.2,-23.4 985.2,-20.4 981.2,-21.9" stroke-width="1.4"/>
<line x1="968.7" y1="35.2" x2="988.2" y2="47.6" />
<polyline points="968.7,35.2 965.2,34.7 965.7,45.2" stroke-width="1.5"/>
<polyline points="988.2,47.6 989.2,50.6 985.2,53.6 981.2,52.1" stroke-width="1.4"/>
<line x1="968.7" y1="109.2" x2="988.2" y2="121.6" />
<polyline points="968.7,109.2 965.2,108.7 965.7,119.2" stroke-width="1.5"/>
<polyline points="988.2,121.6 989.2,124.6 985.2,127.6 981.2,126.1" stroke-width="1.4"/>
<line x1="968.7" y1="183.2" x2="988.2" y2="195.6" />
<polyline points="968.7,183.2 965.2,182.7 965.7,193.2" stroke-width="1.5"/>
<polyline points="988.2,195.6 989.2,198.6 985.2,201.6 981.2,200.1" stroke-width="1.4"/>
<line x1="968.7" y1="257.2" x2="988.2" y2="269.6" />
<polyline points="968.7,257.2 965.2,256.7 965.7,267.2" stroke-width="1.5"/>
<polyline points="988.2,269.6 989.2,272.6 985.2,275.6 981.2,274.1" stroke-width="1.4"/>
<line x1="968.7" y1="331.2" x2="988.2" y2="343.6" />
<polyline points="968.7,331.2 965.2,330.7 965.7,341.2" stroke-width="1.5"/>
<polyline points="988.2,343.6 989.2,346.6 985.2,349.6 981.2,348.1" stroke-width="1.4"/>
<line x1="968.7" y1="405.2" x2="988.2" y2="417.6" />
<polyline points="968.7,405.2 965.2,404.7 965.7,415.2" stroke-width="1.5"/>
<polyline points="988.2,417.6 989.2,420.6 985.2,423.6 981.2,422.1" stroke-width="1.4"/>
<line x1="968.7" y1="442.2" x2="988.2" y2="454.6" />
<polyline points="968.7,442.2 965.2,441.7 965.7,452.2" stroke-width="1.5"/>
<polyline points="988.2,454.6 989.2,457.6 985.2,460.6 981.2,459.1" stroke-width="1.4"/>
<line x1="968.7" y1="479.2" x2="988.2" y2="491.6" />
<polyline points="968.7,479.2 965.2,478.7 965.7,489.2" stroke-width="1.5"/>
<polyline points="988.2,491.6 989.2,494.6 985.2,497.6 981.2,496.1" stroke-width="1.4"/>
<line x1="968.7" y1="495.9" x2="988.2" y2="508.2" />
<polyline points="968.7,495.9 965.2,495.4 965.7,505.9" stroke-width="1.5"/>
<polyline points="988.2,508.2 989.2,511.2 985.2,514.2 981.2,512.8" stroke-width="1.4"/>
<line x1="1019.9" y1="-105.4" x2="1039.4" y2="-93" />
<polyline points="1019.9,-105.4 1016.4,-105.9 1016.9,-95.4" stroke-width="1.5"/>
<polyline points="1039.4,-93 1040.4,-90 1036.4,-87 1032.4,-88.5" stroke-width="1.4"/>
<line x1="1019.9" y1="-31.4" x2="1039.4" y2="-19" />
<polyline points="1019.9,-31.4 1016.4,-31.9 1016.9,-21.4" stroke-width="1.5"/>
<polyline points="1039.4,-19 1040.4,-16 1036.4,-13 1032.4,-14.5" stroke-width="1.4"/>
<line x1="1019.9" y1="42.6" x2="1039.4" y2="55" />
<polyline points="1019.9,42.6 1016.4,42.1 1016.9,52.6" stroke-width="1.5"/>
<polyline points="1039.4,55 1040.4,58 1036.4,61 1032.4,59.5" stroke-width="1.4"/>
<line x1="1019.9" y1="116.6" x2="1039.4" y2="129" />
<polyline points="1019.9,116.6 1016.4,116.1 1016.9,126.6" stroke-width="1.5"/>
<polyline points="1039.4,129 1040.4,132 1036.4,135 1032.4,133.5" stroke-width="1.4"/>
<line x1="1019.9" y1="190.6" x2="1039.4" y2="203" />
<polyline points="1019.9,190.6 1016.4,190.1 1016.9,200.6" stroke-width="1.5"/>
<polyline points="1039.4,203 1040.4,206 1036.4,209 1032.4,207.5" stroke-width="1.4"/>
<line x1="1019.9" y1="264.6" x2="1039.4" y2="277" />
<polyline points="1019.9,264.6 1016.4,264.1 1016.9,274.6" stroke-width="1.5"/>
<polyline points="1039.4,277 1040.4,280 1036.4,283 1032.4,281.5" stroke-width="1.4"/>
<line x1="1019.9" y1="338.6" x2="1039.4" y2="351" />
<polyline points="1019.9,338.6 1016.4,338.1 1016.9,348.6" stroke-width="1.5"/>
<polyline points="1039.4,351 1040.4,354 1036.4,357 1032.4,355.5" stroke-width="1.4"/>
<line x1="1019.9" y1="375.6" x2="1039.4" y2="388" />
<polyline points="1019.9,375.6 1016.4,375.1 1016.9,385.6" stroke-width="1.5"/>
<polyline points="1039.4,388 1040.4,391 1036.4,394 1032.4,392.5" stroke-width="1.4"/>
<line x1="1019.9" y1="412.6" x2="1039.4" y2="425" />
<polyline points="1019.9,412.6 1016.4,412.1 1016.9,422.6" stroke-width="1.5"/>
<polyline points="1039.4,425 1040.4,428 1036.4,431 1032.4,429.5" stroke-width="1.4"/>
<line x1="1019.9" y1="449.6" x2="1039.4" y2="462" />
<polyline points="1019.9,449.6 1016.4,449.1 1016.9,459.6" stroke-width="1.5"/>
<polyline points="1039.4,462 1040.4,465 1036.4,468 1032.4,466.5" stroke-width="1.4"/>
<line x1="1019.9" y1="466.3" x2="1039.4" y2="478.7" />
<polyline points="1019.9,466.3 1016.4,465.8 1016.9,476.3" stroke-width="1.5"/>
<polyline points="1039.4,478.7 1040.4,481.7 1036.4,484.7 1032.4,483.2" stroke-width="1.4"/>
<line x1="1058.3" y1="-127.6" x2="1077.8" y2="-115.2" />
<polyline points="1058.3,-127.6 1054.8,-128.1 1055.3,-117.6" stroke-width="1.5"/>
<polyline points="1077.8,-115.2 1078.8,-112.2 1074.8,-109.2 1070.8,-110.7" stroke-width="1.4"/>
<line x1="1058.3" y1="-90.6" x2="1077.8" y2="-78.2" />
<polyline points="1058.3,-90.6 1054.8,-91.1 1055.3,-80.6" stroke-width="1.5"/>
<polyline points="1077.8,-78.2 1078.8,-75.2 1074.8,-72.2 1070.8,-73.7" stroke-width="1.4"/>
<line x1="1058.3" y1="-53.6" x2="1077.8" y2="-41.2" />
<polyline points="1058.3,-53.6 1054.8,-54.1 1055.3,-43.6" stroke-width="1.5"/>
<polyline points="1077.8,-41.2 1078.8,-38.2 1074.8,-35.2 1070.8,-36.7" stroke-width="1.4"/>
<line x1="1058.3" y1="-16.6" x2="1077.8" y2="-4.2" />
<polyline points="1058.3,-16.6 1054.8,-17.1 1055.3,-6.6" stroke-width="1.5"/>
<polyline points="1077.8,-4.2 1078.8,-1.2 1074.8,1.8 1070.8,0.3" stroke-width="1.4"/>
<line x1="1058.3" y1="20.4" x2="1077.8" y2="32.8" />
<polyline points="1058.3,20.4 1054.8,19.9 1055.3,30.4" stroke-width="1.5"/>
<polyline points="1077.8,32.8 1078.8,35.8 1074.8,38.8 1070.8,37.3" stroke-width="1.4"/>
<line x1="1058.3" y1="57.4" x2="1077.8" y2="69.8" />
<polyline points="1058.3,57.4 1054.8,56.9 1055.3,67.4" stroke-width="1.5"/>
<polyline points="1077.8,69.8 1078.8,72.8 1074.8,75.8 1070.8,74.3" stroke-width="1.4"/>
<line x1="1058.3" y1="94.4" x2="1077.8" y2="106.8" />
<polyline points="1058.3,94.4 1054.8,93.9 1055.3,104.4" stroke-width="1.5"/>
<polyline points="1077.8,106.8 1078.8,109.8 1074.8,112.8 1070.8,111.3" stroke-width="1.4"/>
<line x1="1058.3" y1="131.4" x2="1077.8" y2="143.8" />
<polyline points="1058.3,131.4 1054.8,130.9 1055.3,141.4" stroke-width="1.5"/>
<polyline points="1077.8,143.8 1078.8,146.8 1074.8,149.8 1070.8,148.3" stroke-width="1.4"/>
<line x1="1058.3" y1="168.4" x2="1077.8" y2="180.8" />
<polyline points="1058.3,168.4 1054.8,167.9 1055.3,178.4" stroke-width="1.5"/>
<polyline points="1077.8,180.8 1078.8,183.8 1074.8,186.8 1070.8,185.3" stroke-width="1.4"/>
<line x1="1058.3" y1="205.4" x2="1077.8" y2="217.8" />
<polyline points="1058.3,205.4 1054.8,204.9 1055.3,215.4" stroke-width="1.5"/>
<polyline points="1077.8,217.8 1078.8,220.8 1074.8,223.8 1070.8,222.3" stroke-width="1.4"/>
<line x1="1058.3" y1="242.4" x2="1077.8" y2="254.8" />
<polyline points="1058.3,242.4 1054.8,241.9 1055.3,252.4" stroke-width="1.5"/>
<polyline points="1077.8,254.8 1078.8,257.8 1074.8,260.8 1070.8,259.3" stroke-width="1.4"/>
<line x1="1058.3" y1="279.4" x2="1077.8" y2="291.8" />
<polyline points="1058.3,279.4 1054.8,278.9 1055.3,289.4" stroke-width="1.5"/>
<polyline points="1077.8,291.8 1078.8,294.8 1074.8,297.8 1070.8,296.3" stroke-width="1.4"/>
<line x1="1058.3" y1="316.4" x2="1077.8" y2="328.8" />
<polyline points="1058.3,316.4 1054.8,315.9 1055.3,326.4" stroke-width="1.5"/>
<polyline points="1077.8,328.8 1078.8,331.8 1074.8,334.8 1070.8,333.3" stroke-width="1.4"/>
<line x1="1058.3" y1="353.4" x2="1077.8" y2="365.8" />
<polyline points="1058.3,353.4 1054.8,352.9 1055.3,363.4" stroke-width="1.5"/>
<polyline points="1077.8,365.8 1078.8,368.8 1074.8,371.8 1070.8,370.3" stroke-width="1.4"/>
<line x1="1058.3" y1="390.4" x2="1077.8" y2="402.8" />
<polyline points="1058.3,390.4 1054.8,389.9 1055.3,400.4" stroke-width="1.5"/>
<polyline points="1077.8,402.8 1078.8,405.8 1074.8,408.8 1070.8,407.3" stroke-width="1.4"/>
<line x1="1058.3" y1="427.4" x2="1077.8" y2="439.8" />
<polyline points="1058.3,427.4 1054.8,426.9 1055.3,437.4" stroke-width="1.5"/>
<polyline points="1077.8,439.8 1078.8,442.8 1074.8,445.8 1070.8,444.3" stroke-width="1.4"/>
<line x1="1058.3" y1="444.1" x2="1077.8" y2="456.5" />
<polyline points="1058.3,444.1 1054.8,443.6 1055.3,454.1" stroke-width="1.5"/>
<polyline points="1077.8,456.5 1078.8,459.5 1074.8,462.5 1070.8,461" stroke-width="1.4"/>
</g>
<g stroke="#a8a024" stroke-width="1" stroke-dasharray="1 5">
<line x1="548.2" y1="169.7" x2="565.8" y2="180.8" />
<line x1="548.2" y1="206.7" x2="565.8" y2="217.8" />
<line x1="548.2" y1="243.7" x2="565.8" y2="254.8" />
<line x1="548.2" y1="280.7" x2="565.8" y2="291.8" />
<line x1="548.2" y1="317.7" x2="565.8" y2="328.8" />
<line x1="548.2" y1="354.7" x2="565.8" y2="365.8" />
<line x1="548.2" y1="391.7" x2="565.8" y2="402.8" />
<line x1="548.2" y1="428.7" x2="565.8" y2="439.8" />
<line x1="548.2" y1="465.7" x2="565.8" y2="476.8" />
<line x1="548.2" y1="502.7" x2="565.8" y2="513.8" />
<line x1="548.2" y1="539.7" x2="565.8" y2="550.8" />
<line x1="548.2" y1="576.7" x2="565.8" y2="587.8" />
<line x1="548.2" y1="613.7" x2="565.8" y2="624.8" />
<line x1="548.2" y1="650.7" x2="565.8" y2="661.8" />
<line x1="548.2" y1="687.7" x2="565.8" y2="698.8" />
<line x1="548.2" y1="724.7" x2="565.8" y2="735.8" />
<line x1="548.2" y1="741.3" x2="565.8" y2="752.5" />
<line x1="586.6" y1="184.5" x2="604.2" y2="195.6" />
<line x1="586.6" y1="258.5" x2="604.2" y2="269.6" />
<line x1="586.6" y1="332.5" x2="604.2" y2="343.6" />
<line x1="586.6" y1="406.5" x2="604.2" y2="417.6" />
<line x1="586.6" y1="480.5" x2="604.2" y2="491.6" />
<line x1="586.6" y1="554.5" x2="604.2" y2="565.6" />
<line x1="586.6" y1="628.5" x2="604.2" y2="639.6" />
<line x1="586.6" y1="665.5" x2="604.2" y2="676.6" />
<line x1="586.6" y1="702.5" x2="604.2" y2="713.6" />
<line x1="586.6" y1="719.1" x2="604.2" y2="730.2" />
<line x1="637.8" y1="117.9" x2="655.4" y2="129" />
<line x1="637.8" y1="191.9" x2="655.4" y2="203" />
<line x1="637.8" y1="265.9" x2="655.4" y2="277" />
<line x1="637.8" y1="339.9" x2="655.4" y2="351" />
<line x1="637.8" y1="413.9" x2="655.4" y2="425" />
<line x1="637.8" y1="487.9" x2="655.4" y2="499" />
<line x1="637.8" y1="561.9" x2="655.4" y2="573" />
<line x1="637.8" y1="598.9" x2="655.4" y2="610" />
<line x1="637.8" y1="635.9" x2="655.4" y2="647" />
<line x1="637.8" y1="672.9" x2="655.4" y2="684" />
<line x1="637.8" y1="689.5" x2="655.4" y2="700.6" />
<line x1="682.6" y1="129" x2="700.2" y2="140.1" />
<line x1="682.6" y1="203" x2="700.2" y2="214.1" />
<line x1="682.6" y1="277" x2="700.2" y2="288.1" />
<line x1="682.6" y1="351" x2="700.2" y2="362.1" />
<line x1="682.6" y1="425" x2="700.2" y2="436.1" />
<line x1="682.6" y1="499" x2="700.2" y2="510.1" />
<line x1="682.6" y1="573" x2="700.2" y2="584.1" />
<line x1="682.6" y1="610" x2="700.2" y2="621.1" />
<line x1="682.6" y1="647" x2="700.2" y2="658.1" />
<line x1="682.6" y1="663.6" x2="700.2" y2="674.8" />
<line x1="733.8" y1="62.4" x2="751.4" y2="73.5" />
<line x1="733.8" y1="136.4" x2="751.4" y2="147.5" />
<line x1="733.8" y1="210.4" x2="751.4" y2="221.5" />
<line x1="733.8" y1="284.4" x2="751.4" y2="295.5" />
<line x1="733.8" y1="358.4" x2="751.4" y2="369.5" />
<line x1="733.8" y1="432.4" x2="751.4" y2="443.5" />
<line x1="733.8" y1="506.4" x2="751.4" y2="517.5" />
<line x1="733.8" y1="543.4" x2="751.4" y2="554.5" />
<line x1="733.8" y1="580.4" x2="751.4" y2="591.5" />
<line x1="733.8" y1="617.4" x2="751.4" y2="628.5" />
<line x1="733.8" y1="634" x2="751.4" y2="645.1" />
<line x1="778.6" y1="73.5" x2="796.2" y2="84.6" />
<line x1="778.6" y1="147.5" x2="796.2" y2="158.6" />
<line x1="778.6" y1="221.5" x2="796.2" y2="232.6" />
<line x1="778.6" y1="295.5" x2="796.2" y2="306.6" />
<line x1="778.6" y1="369.5" x2="796.2" y2="380.6" />
<line x1="778.6" y1="443.5" x2="796.2" y2="454.6" />
<line x1="778.6" y1="517.5" x2="796.2" y2="528.6" />
<line x1="778.6" y1="554.5" x2="796.2" y2="565.6" />
<line x1="778.6" y1="591.5" x2="796.2" y2="602.6" />
<line x1="778.6" y1="608.1" x2="796.2" y2="619.2" />
<line x1="829.8" y1="6.9" x2="847.4" y2="18" />
<line x1="829.8" y1="80.9" x2="847.4" y2="92" />
<line x1="829.8" y1="154.9" x2="847.4" y2="166" />
<line x1="829.8" y1="228.9" x2="847.4" y2="240" />
<line x1="829.8" y1="302.9" x2="847.4" y2="314" />
<line x1="829.8" y1="376.9" x2="847.4" y2="388" />
<line x1="829.8" y1="450.9" x2="847.4" y2="462" />
<line x1="829.8" y1="487.9" x2="847.4" y2="499" />
<line x1="829.8" y1="524.9" x2="847.4" y2="536" />
<line x1="829.8" y1="561.9" x2="847.4" y2="573" />
<line x1="829.8" y1="578.5" x2="847.4" y2="589.7" />
<line x1="874.6" y1="18" x2="892.2" y2="29.1" />
<line x1="874.6" y1="92" x2="892.2" y2="103.1" />
<line x1="874.6" y1="166" x2="892.2" y2="177.1" />
<line x1="874.6" y1="240" x2="892.2" y2="251.1" />
<line x1="874.6" y1="314" x2="892.2" y2="325.1" />
<line x1="874.6" y1="388" x2="892.2" y2="399.1" />
<line x1="874.6" y1="462" x2="892.2" y2="473.1" />
<line x1="874.6" y1="499" x2="892.2" y2="510.1" />
<line x1="874.6" y1="536" x2="892.2" y2="547.1" />
<line x1="874.6" y1="552.6" x2="892.2" y2="563.8" />
<line x1="925.8" y1="-48.6" x2="943.4" y2="-37.5" />
<line x1="925.8" y1="25.4" x2="943.4" y2="36.5" />
<line x1="925.8" y1="99.4" x2="943.4" y2="110.5" />
<line x1="925.8" y1="173.4" x2="943.4" y2="184.5" />
<line x1="925.8" y1="247.4" x2="943.4" y2="258.5" />
<line x1="925.8" y1="321.4" x2="943.4" y2="332.5" />
<line x1="925.8" y1="395.4" x2="943.4" y2="406.5" />
<line x1="925.8" y1="432.4" x2="943.4" y2="443.5" />
<line x1="925.8" y1="469.4" x2="943.4" y2="480.5" />
<line x1="925.8" y1="506.4" x2="943.4" y2="517.5" />
<line x1="925.8" y1="523" x2="943.4" y2="534.2" />
<line x1="970.6" y1="-37.5" x2="988.2" y2="-26.4" />
<line x1="970.6" y1="36.5" x2="988.2" y2="47.6" />
<line x1="970.6" y1="110.5" x2="988.2" y2="121.6" />
<line x1="970.6" y1="184.5" x2="988.2" y2="195.6" />
<line x1="970.6" y1="258.5" x2="988.2" y2="269.6" />
<line x1="970.6" y1="332.5" x2="988.2" y2="343.6" />
<line x1="970.6" y1="406.5" x2="988.2" y2="417.6" />
<line x1="970.6" y1="443.5" x2="988.2" y2="454.6" />
<line x1="970.6" y1="480.5" x2="988.2" y2="491.6" />
<line x1="970.6" y1="497.1" x2="988.2" y2="508.2" />
<line x1="1021.8" y1="-104.1" x2="1039.4" y2="-93" />
<line x1="1021.8" y1="-30.1" x2="1039.4" y2="-19" />
<line x1="1021.8" y1="43.9" x2="1039.4" y2="55" />
<line x1="1021.8" y1="117.9" x2="1039.4" y2="129" />
<line x1="1021.8" y1="191.9" x2="1039.4" y2="203" />
<line x1="1021.8" y1="265.9" x2="1039.4" y2="277" />
<line x1="1021.8" y1="339.9" x2="1039.4" y2="351" />
<line x1="1021.8" y1="376.9" x2="1039.4" y2="388" />
<line x1="1021.8" y1="413.9" x2="1039.4" y2="425" />
<line x1="1021.8" y1="450.9" x2="1039.4" y2="462" />
<line x1="1021.8" y1="467.5" x2="1039.4" y2="478.7" />
<line x1="1060.2" y1="-126.3" x2="1077.8" y2="-115.2" />
<line x1="1060.2" y1="-89.3" x2="1077.8" y2="-78.2" />
<line x1="1060.2" y1="-52.3" x2="1077.8" y2="-41.2" />
<line x1="1060.2" y1="-15.3" x2="1077.8" y2="-4.2" />
<line x1="1060.2" y1="21.7" x2="1077.8" y2="32.8" />
<line x1="1060.2" y1="58.7" x2="1077.8" y2="69.8" />
<line x1="1060.2" y1="95.7" x2="1077.8" y2="106.8" />
<line x1="1060.2" y1="132.7" x2="1077.8" y2="143.8" />
<line x1="1060.2" y1="169.7" x2="1077.8" y2="180.8" />
<line x1="1060.2" y1="206.7" x2="1077.8" y2="217.8" />
<line x1="1060.2" y1="243.7" x2="1077.8" y2="254.8" />
<line x1="1060.2" y1="280.7" x2="1077.8" y2="291.8" />
<line x1="1060.2" y1="317.7" x2="1077.8" y2="328.8" />
<line x1="1060.2" y1="354.7" x2="1077.8" y2="365.8" />
<line x1="1060.2" y1="391.7" x2="1077.8" y2="402.8" />
<line x1="1060.2" y1="428.7" x2="1077.8" y2="439.8" />
<line x1="1060.2" y1="445.3" x2="1077.8" y2="456.5" />
</g>
<line x1="546.3" y1="151.2" x2="546.3" y2="757.1" stroke="#3d3414" stroke-width="3"/>
<line x1="546.3" y1="151.2" x2="546.3" y2="757.1" stroke="#6a3010" stroke-width="1.3"/>
<line x1="546.3" y1="95.7" x2="546.3" y2="151.2" stroke="#0c0404" stroke-width="2.8"/>
<line x1="546.3" y1="96.5" x2="546.3" y2="151.2" stroke="#7a0c0c" stroke-width="1.0"/>
<line x1="546.3" y1="151.2" x2="546.3" y2="177.9" stroke="#98622a" stroke-width="1.3"/>
<line x1="584.7" y1="129" x2="584.7" y2="734.9" stroke="#3a3212" stroke-width="2"/>
<line x1="584.7" y1="129" x2="584.7" y2="734.9" stroke="#5a3414" stroke-width="1.0"/>
<line x1="584.7" y1="73" x2="584.7" y2="129" stroke="#0c0404" stroke-width="2.2"/>
<line x1="584.7" y1="73.8" x2="584.7" y2="129" stroke="#4a0a0a" stroke-width="0.6"/>
<line x1="584.7" y1="129" x2="584.7" y2="155.8" stroke="#6a5a24" stroke-width="1.2"/>
<line x1="635.9" y1="99.4" x2="635.9" y2="705.3" stroke="#3d3414" stroke-width="2.9"/>
<line x1="635.9" y1="99.4" x2="635.9" y2="705.3" stroke="#6a3010" stroke-width="1.7"/>
<line x1="635.9" y1="70.9" x2="635.9" y2="99.4" stroke="#0c0404" stroke-width="2.6999999999999997"/>
<line x1="635.9" y1="71.7" x2="635.9" y2="99.4" stroke="#7a0c0c" stroke-width="1.3"/>
<line x1="635.9" y1="99.4" x2="635.9" y2="126.1" stroke="#98622a" stroke-width="1.7"/>
<line x1="680.7" y1="73.5" x2="680.7" y2="679.4" stroke="#3a3212" stroke-width="2"/>
<line x1="680.7" y1="73.5" x2="680.7" y2="679.4" stroke="#5a3414" stroke-width="1.0"/>
<line x1="680.7" y1="17.5" x2="680.7" y2="73.5" stroke="#0c0404" stroke-width="2.2"/>
<line x1="680.7" y1="18.3" x2="680.7" y2="73.5" stroke="#4a0a0a" stroke-width="0.6"/>
<line x1="680.7" y1="73.5" x2="680.7" y2="100.2" stroke="#6a5a24" stroke-width="1.2"/>
<line x1="731.9" y1="43.9" x2="731.9" y2="649.8" stroke="#3d3414" stroke-width="2.9"/>
<line x1="731.9" y1="43.9" x2="731.9" y2="649.8" stroke="#6a3010" stroke-width="1.7"/>
<line x1="731.9" y1="15.4" x2="731.9" y2="43.9" stroke="#0c0404" stroke-width="2.6999999999999997"/>
<line x1="731.9" y1="16.2" x2="731.9" y2="43.9" stroke="#7a0c0c" stroke-width="1.3"/>
<line x1="731.9" y1="43.9" x2="731.9" y2="70.6" stroke="#98622a" stroke-width="1.7"/>
<line x1="776.7" y1="18" x2="776.7" y2="623.9" stroke="#3a3212" stroke-width="2"/>
<line x1="776.7" y1="18" x2="776.7" y2="623.9" stroke="#5a3414" stroke-width="1.0"/>
<line x1="776.7" y1="-38" x2="776.7" y2="18" stroke="#0c0404" stroke-width="2.2"/>
<line x1="776.7" y1="-37.2" x2="776.7" y2="18" stroke="#4a0a0a" stroke-width="0.6"/>
<line x1="776.7" y1="18" x2="776.7" y2="44.8" stroke="#6a5a24" stroke-width="1.2"/>
<line x1="827.9" y1="-11.6" x2="827.9" y2="594.3" stroke="#3d3414" stroke-width="2.9"/>
<line x1="827.9" y1="-11.6" x2="827.9" y2="594.3" stroke="#6a3010" stroke-width="1.7"/>
<line x1="827.9" y1="-40.1" x2="827.9" y2="-11.6" stroke="#0c0404" stroke-width="2.6999999999999997"/>
<line x1="827.9" y1="-39.3" x2="827.9" y2="-11.6" stroke="#7a0c0c" stroke-width="1.3"/>
<line x1="827.9" y1="-11.6" x2="827.9" y2="15.1" stroke="#98622a" stroke-width="1.7"/>
<line x1="872.7" y1="-37.5" x2="872.7" y2="568.4" stroke="#3a3212" stroke-width="2"/>
<line x1="872.7" y1="-37.5" x2="872.7" y2="568.4" stroke="#5a3414" stroke-width="1.0"/>
<line x1="872.7" y1="-93.5" x2="872.7" y2="-37.5" stroke="#0c0404" stroke-width="2.2"/>
<line x1="872.7" y1="-92.7" x2="872.7" y2="-37.5" stroke="#4a0a0a" stroke-width="0.6"/>
<line x1="872.7" y1="-37.5" x2="872.7" y2="-10.8" stroke="#6a5a24" stroke-width="1.2"/>
<line x1="923.9" y1="-67.1" x2="923.9" y2="538.8" stroke="#3d3414" stroke-width="2.9"/>
<line x1="923.9" y1="-67.1" x2="923.9" y2="538.8" stroke="#6a3010" stroke-width="1.7"/>
<line x1="923.9" y1="-95.6" x2="923.9" y2="-67.1" stroke="#0c0404" stroke-width="2.6999999999999997"/>
<line x1="923.9" y1="-94.8" x2="923.9" y2="-67.1" stroke="#7a0c0c" stroke-width="1.3"/>
<line x1="923.9" y1="-67.1" x2="923.9" y2="-40.4" stroke="#98622a" stroke-width="1.7"/>
<line x1="968.7" y1="-93" x2="968.7" y2="512.9" stroke="#3a3212" stroke-width="2"/>
<line x1="968.7" y1="-93" x2="968.7" y2="512.9" stroke="#5a3414" stroke-width="1.0"/>
<line x1="968.7" y1="-149" x2="968.7" y2="-93" stroke="#0c0404" stroke-width="2.2"/>
<line x1="968.7" y1="-148.2" x2="968.7" y2="-93" stroke="#4a0a0a" stroke-width="0.6"/>
<line x1="968.7" y1="-93" x2="968.7" y2="-66.2" stroke="#6a5a24" stroke-width="1.2"/>
<line x1="1019.9" y1="-122.6" x2="1019.9" y2="483.3" stroke="#3d3414" stroke-width="2.9"/>
<line x1="1019.9" y1="-122.6" x2="1019.9" y2="483.3" stroke="#6a3010" stroke-width="1.7"/>
<line x1="1019.9" y1="-151.1" x2="1019.9" y2="-122.6" stroke="#0c0404" stroke-width="2.6999999999999997"/>
<line x1="1019.9" y1="-150.3" x2="1019.9" y2="-122.6" stroke="#7a0c0c" stroke-width="1.3"/>
<line x1="1019.9" y1="-122.6" x2="1019.9" y2="-95.9" stroke="#98622a" stroke-width="1.7"/>
<line x1="1058.3" y1="-144.8" x2="1058.3" y2="461.1" stroke="#3d3414" stroke-width="3"/>
<line x1="1058.3" y1="-144.8" x2="1058.3" y2="461.1" stroke="#6a3010" stroke-width="1.3"/>
<line x1="1058.3" y1="-200.3" x2="1058.3" y2="-144.8" stroke="#0c0404" stroke-width="2.8"/>
<line x1="1058.3" y1="-199.5" x2="1058.3" y2="-144.8" stroke="#7a0c0c" stroke-width="1.0"/>
<line x1="1058.3" y1="-144.8" x2="1058.3" y2="-118.1" stroke="#98622a" stroke-width="1.3"/>
<rect x="631.5" y="672.3" width="8.8" height="36.5" rx="3" fill="#38341a" stroke="none"/>
<rect x="634.7" y="685.3" width="3.4" height="19.5" fill="#66623f" stroke="none"/>
<rect x="632.6" y="694.3" width="6.6" height="1.2" fill="#38341a" stroke="none"/>
<ellipse cx="635.9" cy="706.6" rx="3.2" ry="1.7" fill="#6f6b49" stroke="#38341a" stroke-width="0.8"/>
<rect x="727.5" y="616.8" width="8.8" height="36.5" rx="3" fill="#38341a" stroke="none"/>
<rect x="730.7" y="629.8" width="3.4" height="19.5" fill="#66623f" stroke="none"/>
<rect x="728.6" y="638.8" width="6.6" height="1.2" fill="#38341a" stroke="none"/>
<ellipse cx="731.9" cy="651.1" rx="3.2" ry="1.7" fill="#6f6b49" stroke="#38341a" stroke-width="0.8"/>
<rect x="823.5" y="561.3" width="8.8" height="36.5" rx="3" fill="#38341a" stroke="none"/>
<rect x="826.7" y="574.3" width="3.4" height="19.5" fill="#66623f" stroke="none"/>
<rect x="824.6" y="583.3" width="6.6" height="1.2" fill="#38341a" stroke="none"/>
<ellipse cx="827.9" cy="595.6" rx="3.2" ry="1.7" fill="#6f6b49" stroke="#38341a" stroke-width="0.8"/>
<rect x="919.5" y="505.8" width="8.8" height="36.5" rx="3" fill="#38341a" stroke="none"/>
<rect x="922.7" y="518.8" width="3.4" height="19.5" fill="#66623f" stroke="none"/>
<rect x="920.6" y="527.8" width="6.6" height="1.2" fill="#38341a" stroke="none"/>
<ellipse cx="923.9" cy="540.1" rx="3.2" ry="1.7" fill="#6f6b49" stroke="#38341a" stroke-width="0.8"/>
<rect x="1015.5" y="450.3" width="8.8" height="36.5" rx="3" fill="#38341a" stroke="none"/>
<rect x="1018.7" y="463.3" width="3.4" height="19.5" fill="#66623f" stroke="none"/>
<rect x="1016.6" y="472.3" width="6.6" height="1.2" fill="#38341a" stroke="none"/>
<ellipse cx="1019.9" cy="484.6" rx="3.2" ry="1.7" fill="#6f6b49" stroke="#38341a" stroke-width="0.8"/>
<line x1="561.3" y1="159.9" x2="561.3" y2="765.8" stroke="#3d3414" stroke-width="3"/>
<line x1="561.3" y1="159.9" x2="561.3" y2="765.8" stroke="#6a3010" stroke-width="1.3"/>
<line x1="561.3" y1="104.4" x2="561.3" y2="159.9" stroke="#0c0404" stroke-width="2.8"/>
<line x1="561.3" y1="105.2" x2="561.3" y2="159.9" stroke="#7a0c0c" stroke-width="1.0"/>
<line x1="561.3" y1="159.9" x2="561.3" y2="169.3" stroke="#98622a" stroke-width="1.3"/>
<line x1="601" y1="138.4" x2="601" y2="744.3" stroke="#3d3414" stroke-width="3.6"/>
<line x1="601" y1="138.4" x2="601" y2="744.3" stroke="#6a3010" stroke-width="2"/>
<line x1="601" y1="109.9" x2="601" y2="138.4" stroke="#0c0404" stroke-width="3.4"/>
<line x1="601" y1="110.7" x2="601" y2="138.4" stroke="#7a0c0c" stroke-width="1.3"/>
<line x1="601" y1="138.4" x2="601" y2="146.3" stroke="#98622a" stroke-width="2"/>
<line x1="652.2" y1="108.8" x2="652.2" y2="714.7" stroke="#3a3212" stroke-width="2"/>
<line x1="652.2" y1="108.8" x2="652.2" y2="714.7" stroke="#4a3a18" stroke-width="0.6"/>
<line x1="652.2" y1="52.8" x2="652.2" y2="108.8" stroke="#0c0404" stroke-width="2.2"/>
<line x1="652.2" y1="53.6" x2="652.2" y2="108.8" stroke="#4a0a0a" stroke-width="0.6"/>
<line x1="652.2" y1="108.8" x2="652.2" y2="116.7" stroke="#6a5a24" stroke-width="1.2"/>
<line x1="697" y1="82.9" x2="697" y2="688.8" stroke="#3d3414" stroke-width="3.6"/>
<line x1="697" y1="82.9" x2="697" y2="688.8" stroke="#6a3010" stroke-width="2"/>
<line x1="697" y1="54.4" x2="697" y2="82.9" stroke="#0c0404" stroke-width="3.4"/>
<line x1="697" y1="55.2" x2="697" y2="82.9" stroke="#7a0c0c" stroke-width="1.3"/>
<line x1="697" y1="82.9" x2="697" y2="90.8" stroke="#98622a" stroke-width="2"/>
<line x1="748.2" y1="53.3" x2="748.2" y2="659.2" stroke="#3a3212" stroke-width="2"/>
<line x1="748.2" y1="53.3" x2="748.2" y2="659.2" stroke="#4a3a18" stroke-width="0.6"/>
<line x1="748.2" y1="-2.7" x2="748.2" y2="53.3" stroke="#0c0404" stroke-width="2.2"/>
<line x1="748.2" y1="-1.9" x2="748.2" y2="53.3" stroke="#4a0a0a" stroke-width="0.6"/>
<line x1="748.2" y1="53.3" x2="748.2" y2="61.2" stroke="#6a5a24" stroke-width="1.2"/>
<line x1="793" y1="27.4" x2="793" y2="633.3" stroke="#3d3414" stroke-width="3.6"/>
<line x1="793" y1="27.4" x2="793" y2="633.3" stroke="#6a3010" stroke-width="2"/>
<line x1="793" y1="-1.1" x2="793" y2="27.4" stroke="#0c0404" stroke-width="3.4"/>
<line x1="793" y1="-0.3" x2="793" y2="27.4" stroke="#7a0c0c" stroke-width="1.3"/>
<line x1="793" y1="27.4" x2="793" y2="35.3" stroke="#98622a" stroke-width="2"/>
<line x1="844.2" y1="-2.2" x2="844.2" y2="603.7" stroke="#3a3212" stroke-width="2"/>
<line x1="844.2" y1="-2.2" x2="844.2" y2="603.7" stroke="#4a3a18" stroke-width="0.6"/>
<line x1="844.2" y1="-58.2" x2="844.2" y2="-2.2" stroke="#0c0404" stroke-width="2.2"/>
<line x1="844.2" y1="-57.4" x2="844.2" y2="-2.2" stroke="#4a0a0a" stroke-width="0.6"/>
<line x1="844.2" y1="-2.2" x2="844.2" y2="5.7" stroke="#6a5a24" stroke-width="1.2"/>
<line x1="889" y1="-28.1" x2="889" y2="577.8" stroke="#3d3414" stroke-width="3.6"/>
<line x1="889" y1="-28.1" x2="889" y2="577.8" stroke="#6a3010" stroke-width="2"/>
<line x1="889" y1="-56.6" x2="889" y2="-28.1" stroke="#0c0404" stroke-width="3.4"/>
<line x1="889" y1="-55.8" x2="889" y2="-28.1" stroke="#7a0c0c" stroke-width="1.3"/>
<line x1="889" y1="-28.1" x2="889" y2="-20.2" stroke="#98622a" stroke-width="2"/>
<line x1="940.2" y1="-57.7" x2="940.2" y2="548.2" stroke="#3a3212" stroke-width="2"/>
<line x1="940.2" y1="-57.7" x2="940.2" y2="548.2" stroke="#4a3a18" stroke-width="0.6"/>
<line x1="940.2" y1="-113.7" x2="940.2" y2="-57.7" stroke="#0c0404" stroke-width="2.2"/>
<line x1="940.2" y1="-112.9" x2="940.2" y2="-57.7" stroke="#4a0a0a" stroke-width="0.6"/>
<line x1="940.2" y1="-57.7" x2="940.2" y2="-49.8" stroke="#6a5a24" stroke-width="1.2"/>
<line x1="985" y1="-83.6" x2="985" y2="522.3" stroke="#3d3414" stroke-width="3.6"/>
<line x1="985" y1="-83.6" x2="985" y2="522.3" stroke="#6a3010" stroke-width="2"/>
<line x1="985" y1="-112.1" x2="985" y2="-83.6" stroke="#0c0404" stroke-width="3.4"/>
<line x1="985" y1="-111.3" x2="985" y2="-83.6" stroke="#7a0c0c" stroke-width="1.3"/>
<line x1="985" y1="-83.6" x2="985" y2="-75.7" stroke="#98622a" stroke-width="2"/>
<line x1="1036.2" y1="-113.2" x2="1036.2" y2="492.7" stroke="#3a3212" stroke-width="2"/>
<line x1="1036.2" y1="-113.2" x2="1036.2" y2="492.7" stroke="#4a3a18" stroke-width="0.6"/>
<line x1="1036.2" y1="-169.2" x2="1036.2" y2="-113.2" stroke="#0c0404" stroke-width="2.2"/>
<line x1="1036.2" y1="-168.4" x2="1036.2" y2="-113.2" stroke="#4a0a0a" stroke-width="0.6"/>
<line x1="1036.2" y1="-113.2" x2="1036.2" y2="-105.3" stroke="#6a5a24" stroke-width="1.2"/>
<line x1="1072.2" y1="-136.8" x2="1072.2" y2="469.1" stroke="#3d3414" stroke-width="3"/>
<line x1="1072.2" y1="-136.8" x2="1072.2" y2="469.1" stroke="#6a3010" stroke-width="1.3"/>
<line x1="1072.2" y1="-192.3" x2="1072.2" y2="-136.8" stroke="#0c0404" stroke-width="2.8"/>
<line x1="1072.2" y1="-191.5" x2="1072.2" y2="-136.8" stroke="#7a0c0c" stroke-width="1.0"/>
<line x1="1072.2" y1="-136.8" x2="1072.2" y2="-126.1" stroke="#98622a" stroke-width="1.3"/>
<rect x="596.6" y="709.6" width="8.8" height="36.5" rx="3" fill="#38341a" stroke="none"/>
<rect x="599.8" y="722.6" width="3.4" height="19.5" fill="#66623f" stroke="none"/>
<rect x="597.7" y="731.6" width="6.6" height="1.2" fill="#38341a" stroke="none"/>
<ellipse cx="601" cy="743.9" rx="3.2" ry="1.7" fill="#6f6b49" stroke="#38341a" stroke-width="0.8"/>
<rect x="692.6" y="654.1" width="8.8" height="36.5" rx="3" fill="#38341a" stroke="none"/>
<rect x="695.8" y="667.1" width="3.4" height="19.5" fill="#66623f" stroke="none"/>
<rect x="693.7" y="676.1" width="6.6" height="1.2" fill="#38341a" stroke="none"/>
<ellipse cx="697" cy="688.4" rx="3.2" ry="1.7" fill="#6f6b49" stroke="#38341a" stroke-width="0.8"/>
<rect x="788.6" y="598.6" width="8.8" height="36.5" rx="3" fill="#38341a" stroke="none"/>
<rect x="791.8" y="611.6" width="3.4" height="19.5" fill="#66623f" stroke="none"/>
<rect x="789.7" y="620.6" width="6.6" height="1.2" fill="#38341a" stroke="none"/>
<ellipse cx="793" cy="632.9" rx="3.2" ry="1.7" fill="#6f6b49" stroke="#38341a" stroke-width="0.8"/>
<rect x="884.6" y="543.1" width="8.8" height="36.5" rx="3" fill="#38341a" stroke="none"/>
<rect x="887.8" y="556.1" width="3.4" height="19.5" fill="#66623f" stroke="none"/>
<rect x="885.7" y="565.1" width="6.6" height="1.2" fill="#38341a" stroke="none"/>
<ellipse cx="889" cy="577.4" rx="3.2" ry="1.7" fill="#6f6b49" stroke="#38341a" stroke-width="0.8"/>
<rect x="980.6" y="487.6" width="8.8" height="36.5" rx="3" fill="#38341a" stroke="none"/>
<rect x="983.8" y="500.6" width="3.4" height="19.5" fill="#66623f" stroke="none"/>
<rect x="981.7" y="509.6" width="6.6" height="1.2" fill="#38341a" stroke="none"/>
<ellipse cx="985" cy="521.9" rx="3.2" ry="1.7" fill="#6f6b49" stroke="#38341a" stroke-width="0.8"/>
<g stroke="#000" stroke-width="1">
<polyline points="530.3,757.1 530.3,151.2 1058.3,-154.1" />
<polyline points="530.3,151.2 562.3,169.7 1090.3,-135.6" />
<polyline points="562.3,169.7 562.3,775.6 1090.3,470.3 1090.3,-135.6" />
<line x1="530.3" y1="757.1" x2="562.3" y2="775.6" />
</g>
<g stroke="#000" stroke-width="3.4" stroke-linejoin="round">
<polyline points="537.3,174.7 510.8,190.1 509.6,190.9 508.9,191.9 508.7,193 508.9,194.1 509.6,195.1 510.8,196 518.8,200.6 520.3,201.3 522,201.7 523.9,201.8 525.8,201.7 527.5,201.3 529,200.6 555.6,185.2" />
<polyline points="537.3,211.7 510.8,227.1 509.6,227.9 508.9,228.9 508.7,230 508.9,231.1 509.6,232.1 510.8,233 518.8,237.6 520.3,238.3 522,238.7 523.9,238.8 525.8,238.7 527.5,238.3 529,237.6 555.6,222.2" />
<polyline points="537.3,248.7 510.8,264.1 509.6,264.9 508.9,265.9 508.7,267 508.9,268.1 509.6,269.1 510.8,270 518.8,274.6 520.3,275.3 522,275.7 523.9,275.8 525.8,275.7 527.5,275.3 529,274.6 555.6,259.2" />
<polyline points="537.3,285.7 510.8,301.1 509.6,301.9 508.9,302.9 508.7,304 508.9,305.1 509.6,306.1 510.8,307 518.8,311.6 520.3,312.3 522,312.7 523.9,312.8 525.8,312.7 527.5,312.3 529,311.6 555.6,296.2" />
<polyline points="537.3,322.7 510.8,338.1 509.6,338.9 508.9,339.9 508.7,341 508.9,342.1 509.6,343.1 510.8,344 518.8,348.6 520.3,349.3 522,349.7 523.9,349.8 525.8,349.7 527.5,349.3 529,348.6 555.6,333.2" />
<polyline points="537.3,359.7 510.8,375.1 509.6,375.9 508.9,376.9 508.7,378 508.9,379.1 509.6,380.1 510.8,381 518.8,385.6 520.3,386.3 522,386.7 523.9,386.8 525.8,386.7 527.5,386.3 529,385.6 555.6,370.2" />
<polyline points="537.3,396.7 510.8,412 509.6,412.9 508.9,413.9 508.7,415 508.9,416.1 509.6,417.1 510.8,418 518.8,422.6 520.3,423.3 522,423.7 523.9,423.8 525.8,423.7 527.5,423.3 529,422.6 555.6,407.2" />
<polyline points="537.3,433.7 510.8,449.1 509.6,449.9 508.9,450.9 508.7,452 508.9,453.1 509.6,454.1 510.8,455 518.8,459.6 520.3,460.3 522,460.7 523.9,460.8 525.8,460.7 527.5,460.3 529,459.6 555.6,444.2" />
<polyline points="537.3,470.7 510.8,486.1 509.6,486.9 508.9,487.9 508.7,489 508.9,490.1 509.6,491.1 510.8,492 518.8,496.6 520.3,497.3 522,497.7 523.9,497.8 525.8,497.7 527.5,497.3 529,496.6 555.6,481.2" />
<polyline points="537.3,507.7 510.8,523 509.6,523.9 508.9,524.9 508.7,526 508.9,527.1 509.6,528.1 510.8,529 518.8,533.6 520.3,534.3 522,534.7 523.9,534.8 525.8,534.7 527.5,534.3 529,533.6 555.6,518.2" />
<polyline points="537.3,544.7 510.8,560 509.6,560.9 508.9,561.9 508.7,563 508.9,564.1 509.6,565.1 510.8,566 518.8,570.6 520.3,571.3 522,571.7 523.9,571.8 525.8,571.7 527.5,571.3 529,570.6 555.6,555.2" />
<polyline points="537.3,581.7 510.8,597 509.6,597.9 508.9,598.9 508.7,600 508.9,601.1 509.6,602.1 510.8,603 518.8,607.6 520.3,608.3 522,608.7 523.9,608.8 525.8,608.7 527.5,608.3 529,607.6 555.6,592.2" />
<polyline points="537.3,618.7 510.8,634 509.6,634.9 508.9,635.9 508.7,637 508.9,638.1 509.6,639.1 510.8,640 518.8,644.6 520.3,645.3 522,645.7 523.9,645.8 525.8,645.7 527.5,645.3 529,644.6 555.6,629.2" />
<polyline points="537.3,655.7 510.8,671 509.6,671.9 508.9,672.9 508.7,674 508.9,675.1 509.6,676.1 510.8,677 518.8,681.6 520.3,682.3 522,682.7 523.9,682.8 525.8,682.7 527.5,682.3 529,681.6 555.6,666.2" />
<polyline points="537.3,692.7 510.8,708 509.6,708.9 508.9,709.9 508.7,711 508.9,712.1 509.6,713.1 510.8,714 518.8,718.6 520.3,719.3 522,719.7 523.9,719.8 525.8,719.7 527.5,719.3 529,718.6 555.6,703.2" />
<polyline points="537.3,729.7 510.8,745 509.6,745.9 508.9,746.9 508.7,748 508.9,749.1 509.6,750.1 510.8,751 518.8,755.6 520.3,756.3 522,756.7 523.9,756.8 525.8,756.7 527.5,756.3 529,755.6 555.6,740.2" />
<polyline points="536.4,745.8 508.2,762.1 506.9,763 506.1,764.2 505.8,765.4 506.1,766.6 506.9,767.8 508.2,768.7 517.2,773.9 518.9,774.7 520.8,775.1 522.9,775.3 525,775.1 527,774.7 528.7,773.9 556.9,757.6" />
</g><g stroke="#1a8ad8" stroke-width="1" stroke-linejoin="round" stroke-dasharray="2.4 1.2">
<polyline points="537.3,174.7 510.8,190.1 509.6,190.9 508.9,191.9 508.7,193 508.9,194.1 509.6,195.1 510.8,196 518.8,200.6 520.3,201.3 522,201.7 523.9,201.8 525.8,201.7 527.5,201.3 529,200.6 555.6,185.2" />
<polyline points="537.3,211.7 510.8,227.1 509.6,227.9 508.9,228.9 508.7,230 508.9,231.1 509.6,232.1 510.8,233 518.8,237.6 520.3,238.3 522,238.7 523.9,238.8 525.8,238.7 527.5,238.3 529,237.6 555.6,222.2" />
<polyline points="537.3,248.7 510.8,264.1 509.6,264.9 508.9,265.9 508.7,267 508.9,268.1 509.6,269.1 510.8,270 518.8,274.6 520.3,275.3 522,275.7 523.9,275.8 525.8,275.7 527.5,275.3 529,274.6 555.6,259.2" />
<polyline points="537.3,285.7 510.8,301.1 509.6,301.9 508.9,302.9 508.7,304 508.9,305.1 509.6,306.1 510.8,307 518.8,311.6 520.3,312.3 522,312.7 523.9,312.8 525.8,312.7 527.5,312.3 529,311.6 555.6,296.2" />
<polyline points="537.3,322.7 510.8,338.1 509.6,338.9 508.9,339.9 508.7,341 508.9,342.1 509.6,343.1 510.8,344 518.8,348.6 520.3,349.3 522,349.7 523.9,349.8 525.8,349.7 527.5,349.3 529,348.6 555.6,333.2" />
<polyline points="537.3,359.7 510.8,375.1 509.6,375.9 508.9,376.9 508.7,378 508.9,379.1 509.6,380.1 510.8,381 518.8,385.6 520.3,386.3 522,386.7 523.9,386.8 525.8,386.7 527.5,386.3 529,385.6 555.6,370.2" />
<polyline points="537.3,396.7 510.8,412 509.6,412.9 508.9,413.9 508.7,415 508.9,416.1 509.6,417.1 510.8,418 518.8,422.6 520.3,423.3 522,423.7 523.9,423.8 525.8,423.7 527.5,423.3 529,422.6 555.6,407.2" />
<polyline points="537.3,433.7 510.8,449.1 509.6,449.9 508.9,450.9 508.7,452 508.9,453.1 509.6,454.1 510.8,455 518.8,459.6 520.3,460.3 522,460.7 523.9,460.8 525.8,460.7 527.5,460.3 529,459.6 555.6,444.2" />
<polyline points="537.3,470.7 510.8,486.1 509.6,486.9 508.9,487.9 508.7,489 508.9,490.1 509.6,491.1 510.8,492 518.8,496.6 520.3,497.3 522,497.7 523.9,497.8 525.8,497.7 527.5,497.3 529,496.6 555.6,481.2" />
<polyline points="537.3,507.7 510.8,523 509.6,523.9 508.9,524.9 508.7,526 508.9,527.1 509.6,528.1 510.8,529 518.8,533.6 520.3,534.3 522,534.7 523.9,534.8 525.8,534.7 527.5,534.3 529,533.6 555.6,518.2" />
<polyline points="537.3,544.7 510.8,560 509.6,560.9 508.9,561.9 508.7,563 508.9,564.1 509.6,565.1 510.8,566 518.8,570.6 520.3,571.3 522,571.7 523.9,571.8 525.8,571.7 527.5,571.3 529,570.6 555.6,555.2" />
<polyline points="537.3,581.7 510.8,597 509.6,597.9 508.9,598.9 508.7,600 508.9,601.1 509.6,602.1 510.8,603 518.8,607.6 520.3,608.3 522,608.7 523.9,608.8 525.8,608.7 527.5,608.3 529,607.6 555.6,592.2" />
<polyline points="537.3,618.7 510.8,634 509.6,634.9 508.9,635.9 508.7,637 508.9,638.1 509.6,639.1 510.8,640 518.8,644.6 520.3,645.3 522,645.7 523.9,645.8 525.8,645.7 527.5,645.3 529,644.6 555.6,629.2" />
<polyline points="537.3,655.7 510.8,671 509.6,671.9 508.9,672.9 508.7,674 508.9,675.1 509.6,676.1 510.8,677 518.8,681.6 520.3,682.3 522,682.7 523.9,682.8 525.8,682.7 527.5,682.3 529,681.6 555.6,666.2" />
<polyline points="537.3,692.7 510.8,708 509.6,708.9 508.9,709.9 508.7,711 508.9,712.1 509.6,713.1 510.8,714 518.8,718.6 520.3,719.3 522,719.7 523.9,719.8 525.8,719.7 527.5,719.3 529,718.6 555.6,703.2" />
<polyline points="537.3,729.7 510.8,745 509.6,745.9 508.9,746.9 508.7,748 508.9,749.1 509.6,750.1 510.8,751 518.8,755.6 520.3,756.3 522,756.7 523.9,756.8 525.8,756.7 527.5,756.3 529,755.6 555.6,740.2" />
<polyline points="536.4,745.8 508.2,762.1 506.9,763 506.1,764.2 505.8,765.4 506.1,766.6 506.9,767.8 508.2,768.7 517.2,773.9 518.9,774.7 520.8,775.1 522.9,775.3 525,775.1 527,774.7 528.7,773.9 556.9,757.6" />
</g>
<g clip-path="url(#lf)"><g stroke="#3c3a18" stroke-width="3.5">
<polyline points="1065.3,-130.6 1091.9,-145.9 1093.4,-146.6 1095.1,-147 1097,-147.1 1098.9,-147 1100.6,-146.6 1102.1,-145.9 1110.1,-141.3 1111.3,-140.4 1112,-139.4 1112.3,-138.3 1112,-137.2 1111.3,-136.2 1110.1,-135.4 1083.6,-120" />
<polyline points="1065.3,-93.6 1091.9,-108.9 1093.4,-109.6 1095.1,-110 1097,-110.1 1098.9,-110 1100.6,-109.6 1102.1,-108.9 1110.1,-104.3 1111.3,-103.4 1112,-102.4 1112.3,-101.3 1112,-100.2 1111.3,-99.2 1110.1,-98.4 1083.6,-83" />
<polyline points="1065.3,-56.6 1091.9,-71.9 1093.4,-72.6 1095.1,-73 1097,-73.1 1098.9,-73 1100.6,-72.6 1102.1,-71.9 1110.1,-67.3 1111.3,-66.4 1112,-65.4 1112.3,-64.3 1112,-63.2 1111.3,-62.2 1110.1,-61.4 1083.6,-46" />
<polyline points="1065.3,-19.6 1091.9,-34.9 1093.4,-35.6 1095.1,-36 1097,-36.1 1098.9,-36 1100.6,-35.6 1102.1,-34.9 1110.1,-30.3 1111.3,-29.4 1112,-28.4 1112.3,-27.3 1112,-26.2 1111.3,-25.2 1110.1,-24.4 1083.6,-9" />
<polyline points="1065.3,17.4 1091.9,2.1 1093.4,1.4 1095.1,1 1097,0.9 1098.9,1 1100.6,1.4 1102.1,2.1 1110.1,6.7 1111.3,7.6 1112,8.6 1112.3,9.7 1112,10.8 1111.3,11.8 1110.1,12.6 1083.6,28" />
<polyline points="1065.3,54.4 1091.9,39.1 1093.4,38.4 1095.1,38 1097,37.9 1098.9,38 1100.6,38.4 1102.1,39.1 1110.1,43.7 1111.3,44.6 1112,45.6 1112.3,46.7 1112,47.8 1111.3,48.8 1110.1,49.6 1083.6,65" />
<polyline points="1065.3,91.4 1091.9,76.1 1093.4,75.4 1095.1,75 1097,74.9 1098.9,75 1100.6,75.4 1102.1,76.1 1110.1,80.7 1111.3,81.6 1112,82.6 1112.3,83.7 1112,84.8 1111.3,85.8 1110.1,86.6 1083.6,102" />
<polyline points="1065.3,128.4 1091.9,113.1 1093.4,112.4 1095.1,112 1097,111.9 1098.9,112 1100.6,112.4 1102.1,113.1 1110.1,117.7 1111.3,118.6 1112,119.6 1112.3,120.7 1112,121.8 1111.3,122.8 1110.1,123.6 1083.6,139" />
<polyline points="1065.3,165.4 1091.9,150.1 1093.4,149.4 1095.1,149 1097,148.9 1098.9,149 1100.6,149.4 1102.1,150.1 1110.1,154.7 1111.3,155.6 1112,156.6 1112.3,157.7 1112,158.8 1111.3,159.8 1110.1,160.6 1083.6,176" />
<polyline points="1065.3,202.4 1091.9,187.1 1093.4,186.4 1095.1,186 1097,185.9 1098.9,186 1100.6,186.4 1102.1,187.1 1110.1,191.7 1111.3,192.6 1112,193.6 1112.3,194.7 1112,195.8 1111.3,196.8 1110.1,197.6 1083.6,213" />
<polyline points="1065.3,239.4 1091.9,224.1 1093.4,223.4 1095.1,223 1097,222.9 1098.9,223 1100.6,223.4 1102.1,224.1 1110.1,228.7 1111.3,229.6 1112,230.6 1112.3,231.7 1112,232.8 1111.3,233.8 1110.1,234.6 1083.6,250" />
<polyline points="1065.3,276.4 1091.9,261.1 1093.4,260.4 1095.1,260 1097,259.9 1098.9,260 1100.6,260.4 1102.1,261.1 1110.1,265.7 1111.3,266.6 1112,267.6 1112.3,268.7 1112,269.8 1111.3,270.8 1110.1,271.6 1083.6,287" />
<polyline points="1065.3,313.4 1091.9,298.1 1093.4,297.4 1095.1,297 1097,296.9 1098.9,297 1100.6,297.4 1102.1,298.1 1110.1,302.7 1111.3,303.6 1112,304.6 1112.3,305.7 1112,306.8 1111.3,307.8 1110.1,308.6 1083.6,324" />
<polyline points="1065.3,350.4 1091.9,335.1 1093.4,334.4 1095.1,334 1097,333.9 1098.9,334 1100.6,334.4 1102.1,335.1 1110.1,339.7 1111.3,340.6 1112,341.6 1112.3,342.7 1112,343.8 1111.3,344.8 1110.1,345.6 1083.6,361" />
<polyline points="1065.3,387.4 1091.9,372.1 1093.4,371.4 1095.1,371 1097,370.9 1098.9,371 1100.6,371.4 1102.1,372.1 1110.1,376.7 1111.3,377.6 1112,378.6 1112.3,379.7 1112,380.8 1111.3,381.8 1110.1,382.6 1083.6,398" />
<polyline points="1065.3,424.4 1091.9,409.1 1093.4,408.4 1095.1,408 1097,407.9 1098.9,408 1100.6,408.4 1102.1,409.1 1110.1,413.7 1111.3,414.6 1112,415.6 1112.3,416.7 1112,417.8 1111.3,418.8 1110.1,419.6 1083.6,435" />
<polyline points="1064.4,440.5 1092.5,424.3 1094.2,423.5 1096.2,423 1098.3,422.9 1100.4,423 1102.4,423.5 1104.1,424.3 1113,429.4 1114.3,430.4 1115.1,431.6 1115.4,432.8 1115.1,434 1114.3,435.1 1113,436.1 1084.9,452.4" />
</g><g stroke="#2c6e6c" stroke-width="1" stroke-dasharray="3 1">
<polyline points="1065.3,-130.6 1091.9,-145.9 1093.4,-146.6 1095.1,-147 1097,-147.1 1098.9,-147 1100.6,-146.6 1102.1,-145.9 1110.1,-141.3 1111.3,-140.4 1112,-139.4 1112.3,-138.3 1112,-137.2 1111.3,-136.2 1110.1,-135.4 1083.6,-120" />
<polyline points="1065.3,-93.6 1091.9,-108.9 1093.4,-109.6 1095.1,-110 1097,-110.1 1098.9,-110 1100.6,-109.6 1102.1,-108.9 1110.1,-104.3 1111.3,-103.4 1112,-102.4 1112.3,-101.3 1112,-100.2 1111.3,-99.2 1110.1,-98.4 1083.6,-83" />
<polyline points="1065.3,-56.6 1091.9,-71.9 1093.4,-72.6 1095.1,-73 1097,-73.1 1098.9,-73 1100.6,-72.6 1102.1,-71.9 1110.1,-67.3 1111.3,-66.4 1112,-65.4 1112.3,-64.3 1112,-63.2 1111.3,-62.2 1110.1,-61.4 1083.6,-46" />
<polyline points="1065.3,-19.6 1091.9,-34.9 1093.4,-35.6 1095.1,-36 1097,-36.1 1098.9,-36 1100.6,-35.6 1102.1,-34.9 1110.1,-30.3 1111.3,-29.4 1112,-28.4 1112.3,-27.3 1112,-26.2 1111.3,-25.2 1110.1,-24.4 1083.6,-9" />
<polyline points="1065.3,17.4 1091.9,2.1 1093.4,1.4 1095.1,1 1097,0.9 1098.9,1 1100.6,1.4 1102.1,2.1 1110.1,6.7 1111.3,7.6 1112,8.6 1112.3,9.7 1112,10.8 1111.3,11.8 1110.1,12.6 1083.6,28" />
<polyline points="1065.3,54.4 1091.9,39.1 1093.4,38.4 1095.1,38 1097,37.9 1098.9,38 1100.6,38.4 1102.1,39.1 1110.1,43.7 1111.3,44.6 1112,45.6 1112.3,46.7 1112,47.8 1111.3,48.8 1110.1,49.6 1083.6,65" />
<polyline points="1065.3,91.4 1091.9,76.1 1093.4,75.4 1095.1,75 1097,74.9 1098.9,75 1100.6,75.4 1102.1,76.1 1110.1,80.7 1111.3,81.6 1112,82.6 1112.3,83.7 1112,84.8 1111.3,85.8 1110.1,86.6 1083.6,102" />
<polyline points="1065.3,128.4 1091.9,113.1 1093.4,112.4 1095.1,112 1097,111.9 1098.9,112 1100.6,112.4 1102.1,113.1 1110.1,117.7 1111.3,118.6 1112,119.6 1112.3,120.7 1112,121.8 1111.3,122.8 1110.1,123.6 1083.6,139" />
<polyline points="1065.3,165.4 1091.9,150.1 1093.4,149.4 1095.1,149 1097,148.9 1098.9,149 1100.6,149.4 1102.1,150.1 1110.1,154.7 1111.3,155.6 1112,156.6 1112.3,157.7 1112,158.8 1111.3,159.8 1110.1,160.6 1083.6,176" />
<polyline points="1065.3,202.4 1091.9,187.1 1093.4,186.4 1095.1,186 1097,185.9 1098.9,186 1100.6,186.4 1102.1,187.1 1110.1,191.7 1111.3,192.6 1112,193.6 1112.3,194.7 1112,195.8 1111.3,196.8 1110.1,197.6 1083.6,213" />
<polyline points="1065.3,239.4 1091.9,224.1 1093.4,223.4 1095.1,223 1097,222.9 1098.9,223 1100.6,223.4 1102.1,224.1 1110.1,228.7 1111.3,229.6 1112,230.6 1112.3,231.7 1112,232.8 1111.3,233.8 1110.1,234.6 1083.6,250" />
<polyline points="1065.3,276.4 1091.9,261.1 1093.4,260.4 1095.1,260 1097,259.9 1098.9,260 1100.6,260.4 1102.1,261.1 1110.1,265.7 1111.3,266.6 1112,267.6 1112.3,268.7 1112,269.8 1111.3,270.8 1110.1,271.6 1083.6,287" />
<polyline points="1065.3,313.4 1091.9,298.1 1093.4,297.4 1095.1,297 1097,296.9 1098.9,297 1100.6,297.4 1102.1,298.1 1110.1,302.7 1111.3,303.6 1112,304.6 1112.3,305.7 1112,306.8 1111.3,307.8 1110.1,308.6 1083.6,324" />
<polyline points="1065.3,350.4 1091.9,335.1 1093.4,334.4 1095.1,334 1097,333.9 1098.9,334 1100.6,334.4 1102.1,335.1 1110.1,339.7 1111.3,340.6 1112,341.6 1112.3,342.7 1112,343.8 1111.3,344.8 1110.1,345.6 1083.6,361" />
<polyline points="1065.3,387.4 1091.9,372.1 1093.4,371.4 1095.1,371 1097,370.9 1098.9,371 1100.6,371.4 1102.1,372.1 1110.1,376.7 1111.3,377.6 1112,378.6 1112.3,379.7 1112,380.8 1111.3,381.8 1110.1,382.6 1083.6,398" />
<polyline points="1065.3,424.4 1091.9,409.1 1093.4,408.4 1095.1,408 1097,407.9 1098.9,408 1100.6,408.4 1102.1,409.1 1110.1,413.7 1111.3,414.6 1112,415.6 1112.3,416.7 1112,417.8 1111.3,418.8 1110.1,419.6 1083.6,435" />
<polyline points="1064.4,440.5 1092.5,424.3 1094.2,423.5 1096.2,423 1098.3,422.9 1100.4,423 1102.4,423.5 1104.1,424.3 1113,429.4 1114.3,430.4 1115.1,431.6 1115.4,432.8 1115.1,434 1114.3,435.1 1113,436.1 1084.9,452.4" />
</g></g>
<g clip-path="url(#rt)"><g stroke="#000" stroke-width="3.4" stroke-linejoin="round">
<polyline points="1065.3,-130.6 1091.9,-145.9 1093.4,-146.6 1095.1,-147 1097,-147.1 1098.9,-147 1100.6,-146.6 1102.1,-145.9 1110.1,-141.3 1111.3,-140.4 1112,-139.4 1112.3,-138.3 1112,-137.2 1111.3,-136.2 1110.1,-135.4 1083.6,-120" />
<polyline points="1065.3,-93.6 1091.9,-108.9 1093.4,-109.6 1095.1,-110 1097,-110.1 1098.9,-110 1100.6,-109.6 1102.1,-108.9 1110.1,-104.3 1111.3,-103.4 1112,-102.4 1112.3,-101.3 1112,-100.2 1111.3,-99.2 1110.1,-98.4 1083.6,-83" />
<polyline points="1065.3,-56.6 1091.9,-71.9 1093.4,-72.6 1095.1,-73 1097,-73.1 1098.9,-73 1100.6,-72.6 1102.1,-71.9 1110.1,-67.3 1111.3,-66.4 1112,-65.4 1112.3,-64.3 1112,-63.2 1111.3,-62.2 1110.1,-61.4 1083.6,-46" />
<polyline points="1065.3,-19.6 1091.9,-34.9 1093.4,-35.6 1095.1,-36 1097,-36.1 1098.9,-36 1100.6,-35.6 1102.1,-34.9 1110.1,-30.3 1111.3,-29.4 1112,-28.4 1112.3,-27.3 1112,-26.2 1111.3,-25.2 1110.1,-24.4 1083.6,-9" />
<polyline points="1065.3,17.4 1091.9,2.1 1093.4,1.4 1095.1,1 1097,0.9 1098.9,1 1100.6,1.4 1102.1,2.1 1110.1,6.7 1111.3,7.6 1112,8.6 1112.3,9.7 1112,10.8 1111.3,11.8 1110.1,12.6 1083.6,28" />
<polyline points="1065.3,54.4 1091.9,39.1 1093.4,38.4 1095.1,38 1097,37.9 1098.9,38 1100.6,38.4 1102.1,39.1 1110.1,43.7 1111.3,44.6 1112,45.6 1112.3,46.7 1112,47.8 1111.3,48.8 1110.1,49.6 1083.6,65" />
<polyline points="1065.3,91.4 1091.9,76.1 1093.4,75.4 1095.1,75 1097,74.9 1098.9,75 1100.6,75.4 1102.1,76.1 1110.1,80.7 1111.3,81.6 1112,82.6 1112.3,83.7 1112,84.8 1111.3,85.8 1110.1,86.6 1083.6,102" />
<polyline points="1065.3,128.4 1091.9,113.1 1093.4,112.4 1095.1,112 1097,111.9 1098.9,112 1100.6,112.4 1102.1,113.1 1110.1,117.7 1111.3,118.6 1112,119.6 1112.3,120.7 1112,121.8 1111.3,122.8 1110.1,123.6 1083.6,139" />
<polyline points="1065.3,165.4 1091.9,150.1 1093.4,149.4 1095.1,149 1097,148.9 1098.9,149 1100.6,149.4 1102.1,150.1 1110.1,154.7 1111.3,155.6 1112,156.6 1112.3,157.7 1112,158.8 1111.3,159.8 1110.1,160.6 1083.6,176" />
<polyline points="1065.3,202.4 1091.9,187.1 1093.4,186.4 1095.1,186 1097,185.9 1098.9,186 1100.6,186.4 1102.1,187.1 1110.1,191.7 1111.3,192.6 1112,193.6 1112.3,194.7 1112,195.8 1111.3,196.8 1110.1,197.6 1083.6,213" />
<polyline points="1065.3,239.4 1091.9,224.1 1093.4,223.4 1095.1,223 1097,222.9 1098.9,223 1100.6,223.4 1102.1,224.1 1110.1,228.7 1111.3,229.6 1112,230.6 1112.3,231.7 1112,232.8 1111.3,233.8 1110.1,234.6 1083.6,250" />
<polyline points="1065.3,276.4 1091.9,261.1 1093.4,260.4 1095.1,260 1097,259.9 1098.9,260 1100.6,260.4 1102.1,261.1 1110.1,265.7 1111.3,266.6 1112,267.6 1112.3,268.7 1112,269.8 1111.3,270.8 1110.1,271.6 1083.6,287" />
<polyline points="1065.3,313.4 1091.9,298.1 1093.4,297.4 1095.1,297 1097,296.9 1098.9,297 1100.6,297.4 1102.1,298.1 1110.1,302.7 1111.3,303.6 1112,304.6 1112.3,305.7 1112,306.8 1111.3,307.8 1110.1,308.6 1083.6,324" />
<polyline points="1065.3,350.4 1091.9,335.1 1093.4,334.4 1095.1,334 1097,333.9 1098.9,334 1100.6,334.4 1102.1,335.1 1110.1,339.7 1111.3,340.6 1112,341.6 1112.3,342.7 1112,343.8 1111.3,344.8 1110.1,345.6 1083.6,361" />
<polyline points="1065.3,387.4 1091.9,372.1 1093.4,371.4 1095.1,371 1097,370.9 1098.9,371 1100.6,371.4 1102.1,372.1 1110.1,376.7 1111.3,377.6 1112,378.6 1112.3,379.7 1112,380.8 1111.3,381.8 1110.1,382.6 1083.6,398" />
<polyline points="1065.3,424.4 1091.9,409.1 1093.4,408.4 1095.1,408 1097,407.9 1098.9,408 1100.6,408.4 1102.1,409.1 1110.1,413.7 1111.3,414.6 1112,415.6 1112.3,416.7 1112,417.8 1111.3,418.8 1110.1,419.6 1083.6,435" />
<polyline points="1064.4,440.5 1092.5,424.3 1094.2,423.5 1096.2,423 1098.3,422.9 1100.4,423 1102.4,423.5 1104.1,424.3 1113,429.4 1114.3,430.4 1115.1,431.6 1115.4,432.8 1115.1,434 1114.3,435.1 1113,436.1 1084.9,452.4" />
</g><g stroke="#1a8ad8" stroke-width="1" stroke-linejoin="round" stroke-dasharray="2.4 1.2">
<polyline points="1065.3,-130.6 1091.9,-145.9 1093.4,-146.6 1095.1,-147 1097,-147.1 1098.9,-147 1100.6,-146.6 1102.1,-145.9 1110.1,-141.3 1111.3,-140.4 1112,-139.4 1112.3,-138.3 1112,-137.2 1111.3,-136.2 1110.1,-135.4 1083.6,-120" />
<polyline points="1065.3,-93.6 1091.9,-108.9 1093.4,-109.6 1095.1,-110 1097,-110.1 1098.9,-110 1100.6,-109.6 1102.1,-108.9 1110.1,-104.3 1111.3,-103.4 1112,-102.4 1112.3,-101.3 1112,-100.2 1111.3,-99.2 1110.1,-98.4 1083.6,-83" />
<polyline points="1065.3,-56.6 1091.9,-71.9 1093.4,-72.6 1095.1,-73 1097,-73.1 1098.9,-73 1100.6,-72.6 1102.1,-71.9 1110.1,-67.3 1111.3,-66.4 1112,-65.4 1112.3,-64.3 1112,-63.2 1111.3,-62.2 1110.1,-61.4 1083.6,-46" />
<polyline points="1065.3,-19.6 1091.9,-34.9 1093.4,-35.6 1095.1,-36 1097,-36.1 1098.9,-36 1100.6,-35.6 1102.1,-34.9 1110.1,-30.3 1111.3,-29.4 1112,-28.4 1112.3,-27.3 1112,-26.2 1111.3,-25.2 1110.1,-24.4 1083.6,-9" />
<polyline points="1065.3,17.4 1091.9,2.1 1093.4,1.4 1095.1,1 1097,0.9 1098.9,1 1100.6,1.4 1102.1,2.1 1110.1,6.7 1111.3,7.6 1112,8.6 1112.3,9.7 1112,10.8 1111.3,11.8 1110.1,12.6 1083.6,28" />
<polyline points="1065.3,54.4 1091.9,39.1 1093.4,38.4 1095.1,38 1097,37.9 1098.9,38 1100.6,38.4 1102.1,39.1 1110.1,43.7 1111.3,44.6 1112,45.6 1112.3,46.7 1112,47.8 1111.3,48.8 1110.1,49.6 1083.6,65" />
<polyline points="1065.3,91.4 1091.9,76.1 1093.4,75.4 1095.1,75 1097,74.9 1098.9,75 1100.6,75.4 1102.1,76.1 1110.1,80.7 1111.3,81.6 1112,82.6 1112.3,83.7 1112,84.8 1111.3,85.8 1110.1,86.6 1083.6,102" />
<polyline points="1065.3,128.4 1091.9,113.1 1093.4,112.4 1095.1,112 1097,111.9 1098.9,112 1100.6,112.4 1102.1,113.1 1110.1,117.7 1111.3,118.6 1112,119.6 1112.3,120.7 1112,121.8 1111.3,122.8 1110.1,123.6 1083.6,139" />
<polyline points="1065.3,165.4 1091.9,150.1 1093.4,149.4 1095.1,149 1097,148.9 1098.9,149 1100.6,149.4 1102.1,150.1 1110.1,154.7 1111.3,155.6 1112,156.6 1112.3,157.7 1112,158.8 1111.3,159.8 1110.1,160.6 1083.6,176" />
<polyline points="1065.3,202.4 1091.9,187.1 1093.4,186.4 1095.1,186 1097,185.9 1098.9,186 1100.6,186.4 1102.1,187.1 1110.1,191.7 1111.3,192.6 1112,193.6 1112.3,194.7 1112,195.8 1111.3,196.8 1110.1,197.6 1083.6,213" />
<polyline points="1065.3,239.4 1091.9,224.1 1093.4,223.4 1095.1,223 1097,222.9 1098.9,223 1100.6,223.4 1102.1,224.1 1110.1,228.7 1111.3,229.6 1112,230.6 1112.3,231.7 1112,232.8 1111.3,233.8 1110.1,234.6 1083.6,250" />
<polyline points="1065.3,276.4 1091.9,261.1 1093.4,260.4 1095.1,260 1097,259.9 1098.9,260 1100.6,260.4 1102.1,261.1 1110.1,265.7 1111.3,266.6 1112,267.6 1112.3,268.7 1112,269.8 1111.3,270.8 1110.1,271.6 1083.6,287" />
<polyline points="1065.3,313.4 1091.9,298.1 1093.4,297.4 1095.1,297 1097,296.9 1098.9,297 1100.6,297.4 1102.1,298.1 1110.1,302.7 1111.3,303.6 1112,304.6 1112.3,305.7 1112,306.8 1111.3,307.8 1110.1,308.6 1083.6,324" />
<polyline points="1065.3,350.4 1091.9,335.1 1093.4,334.4 1095.1,334 1097,333.9 1098.9,334 1100.6,334.4 1102.1,335.1 1110.1,339.7 1111.3,340.6 1112,341.6 1112.3,342.7 1112,343.8 1111.3,344.8 1110.1,345.6 1083.6,361" />
<polyline points="1065.3,387.4 1091.9,372.1 1093.4,371.4 1095.1,371 1097,370.9 1098.9,371 1100.6,371.4 1102.1,372.1 1110.1,376.7 1111.3,377.6 1112,378.6 1112.3,379.7 1112,380.8 1111.3,381.8 1110.1,382.6 1083.6,398" />
<polyline points="1065.3,424.4 1091.9,409.1 1093.4,408.4 1095.1,408 1097,407.9 1098.9,408 1100.6,408.4 1102.1,409.1 1110.1,413.7 1111.3,414.6 1112,415.6 1112.3,416.7 1112,417.8 1111.3,418.8 1110.1,419.6 1083.6,435" />
<polyline points="1064.4,440.5 1092.5,424.3 1094.2,423.5 1096.2,423 1098.3,422.9 1100.4,423 1102.4,423.5 1104.1,424.3 1113,429.4 1114.3,430.4 1115.1,431.6 1115.4,432.8 1115.1,434 1114.3,435.1 1113,436.1 1084.9,452.4" />
</g></g>
<line x1="1090.3" y1="-135.6" x2="1090.3" y2="470.3" stroke="#000" stroke-width="1"/>
</g>
<g stroke-width="2" fill="none">
<line x1="434.1" y1="762.7" x2="402" y2="744.3" stroke="#00c896"/>
<line x1="434.1" y1="762.7" x2="466.1" y2="744.3" stroke="#ff1010"/>
<line x1="434.1" y1="763.5" x2="434.1" y2="726" stroke="#0a5cff"/>
</g>
<g font-family="'Liberation Sans', sans-serif" font-size="14.5" fill="#555" text-anchor="middle">
<text x="434.1" y="720.3">Z</text><text x="392.6" y="743.7">Y</text><text x="475.4" y="743.7">X</text></g>
<text x="849.5" y="647.5" font-family="'Liberation Sans', 'Noto Sans CJK SC', sans-serif" font-size="21" fill="#979c9c" font-weight="300">套筒连接</text>
</svg>
<div class="abs" style="left:378px;top:0;width:788px;height:1px;background:#d6d6d6;"></div><div class="abs" style="left:378px;top:1px;width:788px;height:1px;background:#f0f0f0;"></div>
</body></html>
